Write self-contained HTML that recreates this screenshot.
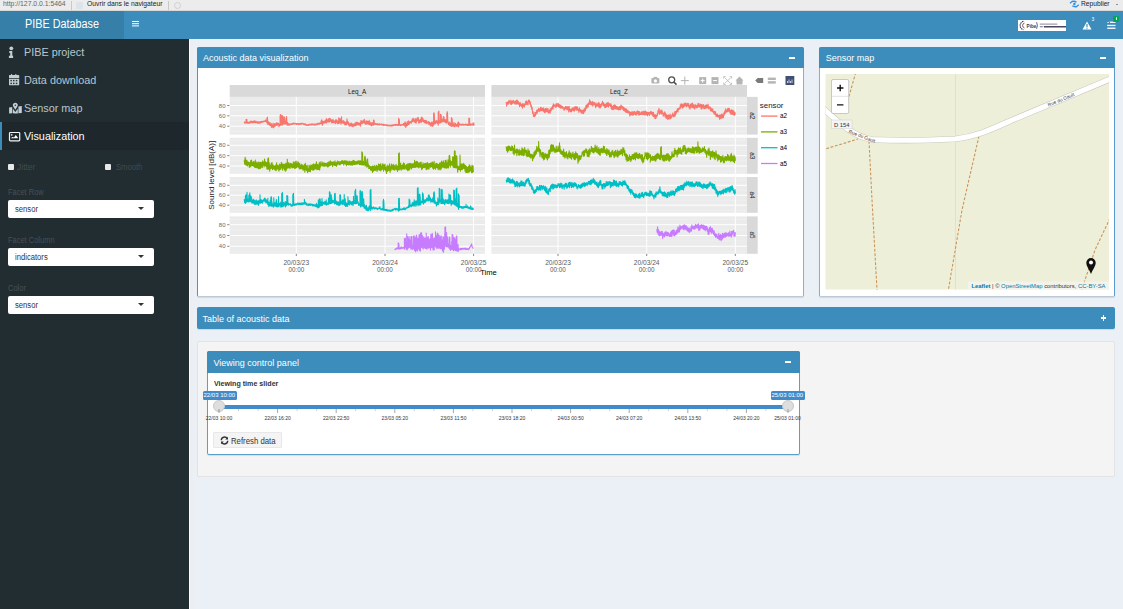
<!DOCTYPE html>
<html><head><meta charset="utf-8">
<style>
*{margin:0;padding:0;box-sizing:border-box}
html,body{width:1123px;height:609px;overflow:hidden}
body{background:#ebeff6;font-family:"Liberation Sans",sans-serif;position:relative}
.a{position:absolute}
.t{position:absolute;white-space:nowrap;line-height:1}
#bbar{left:0;top:0;width:1123px;height:11px;background:#ececec;border-bottom:1px solid #d8d8d8}
#logo{left:0;top:11px;width:124px;height:28px;background:#367fa9;z-index:2}
#nav{left:124px;top:11px;width:999px;height:28px;background:#3c8dbc;z-index:2}
#side{left:0;top:38px;width:189px;height:571px;background:#222d32}
.mi{position:absolute;left:0;width:189px;height:28px}
.mi .lab{position:absolute;left:24px;top:9px;font-size:11px;color:#b8c7ce;white-space:nowrap;line-height:1;transform:scaleX(0.985);transform-origin:0 0}
.mi.act{background:#1e282c;border-left:2px solid #3c8dbc}
.mi.act .lab{color:#fff;left:22px}
.sel{position:absolute;left:8px;width:146px;height:18px;background:#fff;border-radius:2px}
.sel .v{position:absolute;left:7px;top:5px;font-size:8.5px;color:#333;line-height:1;transform:scaleX(0.9);transform-origin:0 0}
.sel .c{position:absolute;left:130px;top:7px;width:0;height:0;border-left:3.5px solid transparent;border-right:3.5px solid transparent;border-top:3.5px solid #333}
.slab{position:absolute;left:8px;font-size:8.6px;color:#465055;line-height:1;white-space:nowrap;transform:scaleX(0.87);transform-origin:0 0}
.box{position:absolute;background:#fff;border:1px solid #8fb8d3;border-radius:2px;box-shadow:0 1px 1px rgba(0,0,0,0.1)}
.bh{position:absolute;left:-1px;top:-1px;right:-1px;background:#3c8dbc;border-radius:2px 2px 0 0}
.bt{position:absolute;font-size:9px;color:#fff;line-height:1;white-space:nowrap}
.minus{position:absolute;width:6px;height:1.6px;background:#fff}
</style></head>
<body>
<!-- browser bar -->
<div class="a" id="bbar"></div>
<div class="t" style="left:3px;top:-0.1px;font-size:7.5px;color:#666;transform:scaleX(0.91);transform-origin:0 0">http://127.0.0.1:5464</div>
<div class="a" style="left:71px;top:1px;width:1px;height:9px;background:#c8c8c8"></div>
<div class="a" style="left:76px;top:2px;width:7px;height:7px;background:#dde3ea;border-radius:1px"></div>
<div class="t" style="left:86.5px;top:-0.1px;font-size:7.5px;color:#222;transform:scaleX(0.90);transform-origin:0 0">Ouvrir dans le navigateur</div>
<div class="a" style="left:168px;top:1px;width:1px;height:9px;background:#c8c8c8"></div>
<div class="a" style="left:173.5px;top:1.5px;width:7.5px;height:7.5px;border:1px solid #d0d0d0;border-radius:50%"></div>
<svg class="a" style="left:1069px;top:0" width="11" height="9" viewBox="0 0 11 9"><path d="M1 3.2 L3 1.5 Q5.5 0.8 7.5 2.2" stroke="#2e90e8" stroke-width="1.3" fill="none"/><path d="M9.8 4.8 L7.8 6.5 Q5.3 7.2 3.3 5.8" stroke="#2e90e8" stroke-width="1.3" fill="none"/><circle cx="5.4" cy="4" r="1.2" fill="#2e90e8"/></svg>
<div class="t" style="left:1080.8px;top:-0.1px;font-size:7.5px;color:#222;transform:scaleX(0.89);transform-origin:0 0">Republier</div>
<div class="a" style="left:1115.7px;top:4px;width:0;height:0;border-left:1.5px solid transparent;border-right:1.5px solid transparent;border-top:1.6px solid #333"></div>

<!-- header -->
<div class="a" id="logo"></div>
<div class="t" style="z-index:3;left:24.7px;top:17.6px;font-size:12.5px;color:#fff;transform:scaleX(0.865);transform-origin:0 0">PIBE Database</div>
<div class="a" id="nav"></div>
<div class="a" style="z-index:3;left:131.7px;top:21px;width:7.5px;height:1.4px;background:#fff;box-shadow:0 2.2px 0 #fff,0 4.4px 0 #fff"></div>
<div class="a" style="z-index:3;left:1018px;top:19.8px;width:48px;height:11px;background:#fff"></div>
<svg class="a" style="z-index:3;left:1018px;top:19.8px" width="48" height="11" viewBox="0 0 48 11">
<path d="M5.5 1.3 A4.3 4.3 0 0 0 5.5 9.7" stroke="#3d3a55" stroke-width="1.1" fill="none" stroke-dasharray="1.6 0.6"/>
<path d="M6.5 3 A2.6 2.6 0 0 0 6.5 8" stroke="#3d3a55" stroke-width="0.8" fill="none"/>
<text x="8.6" y="7.6" font-size="4.6" font-weight="bold" fill="#3d3a55" font-family="Liberation Sans">Pibe</text>
<path d="M18.6 2.2 Q20.2 5.5 18.6 8.8" stroke="#3d3a55" stroke-width="0.8" fill="none"/>
<rect x="21.8" y="3.6" width="17.5" height="1" fill="#8a879a"/>
<rect x="21.8" y="6.1" width="3" height="1.2" fill="#8a879a"/><rect x="25.8" y="6" width="25" height="1.5" fill="#4a4660"/>
</svg>
<svg class="a" style="z-index:3;left:1082px;top:21px" width="10" height="9" viewBox="0 0 10 9"><path d="M5 0.5 L9.5 8.5 L0.5 8.5 Z" fill="#fff"/><rect x="4.4" y="3" width="1.2" height="3" fill="#3c8dbc"/><rect x="4.4" y="6.6" width="1.2" height="1.1" fill="#3c8dbc"/></svg>
<div class="t" style="z-index:3;left:1091.6px;top:17px;font-size:5px;color:#fff">3</div>
<svg class="a" style="z-index:3;left:1106px;top:20px" width="11" height="10" viewBox="0 0 11 10"><path d="M1.2 2.2 L2 3 L3.2 1.6" stroke="#fff" stroke-width="0.7" fill="none"/><rect x="4" y="1.6" width="5.5" height="1.3" fill="#fff"/><rect x="1.2" y="4.8" width="8.3" height="1.3" fill="#fff"/><rect x="1.2" y="7.6" width="8.3" height="1.3" fill="#fff"/></svg>
<div class="a" style="z-index:3;left:1113px;top:16px;width:6.3px;height:5.8px;background:#00a65a;border-radius:1px"></div>
<div class="a" style="z-index:4;left:1115.6px;top:17.2px;width:1.2px;height:3.2px;background:#dff5e8;border-radius:0.6px"></div>
<!-- sidebar -->
<div class="a" id="side"></div>
<div class="a" style="left:189px;top:38px;width:1px;height:571px;background:#f7f9fc"></div><div class="a" style="left:190px;top:38px;width:2.5px;height:571px;background:#eceef1"></div>
<div class="mi" style="top:38px"><div class="lab">PIBE project</div></div>
<div class="mi" style="top:66px"><div class="lab">Data download</div></div>
<div class="mi" style="top:94px"><div class="lab">Sensor map</div></div>
<div class="mi act" style="top:122px"><div class="lab">Visualization</div></div>
<!-- sidebar icons -->
<svg class="a" style="left:6px;top:44px" width="18" height="16" viewBox="0 0 18 16"><circle cx="5.3" cy="4.3" r="1.9" fill="#c2ced4"/><path d="M3.3 7.1 H6.3 V11.8 H7.1 V13.9 H2.9 V11.8 H4.2 V8.9 H3.3 Z" fill="#c2ced4"/></svg>
<svg class="a" style="left:6px;top:72px" width="18" height="16" viewBox="0 0 18 16"><path d="M3 3.4 Q3 3 3.4 3 H5 V2.3 Q5.6 1.6 6.2 2.3 V3 H9.2 V2.3 Q9.8 1.6 10.4 2.3 V3 H12.7 Q13.2 3 13.2 3.4 V5.9 H3 Z" fill="#c2ced4"/><path d="M3 6.7 H13.2 V12.8 Q13.2 13.2 12.8 13.2 H3.4 Q3 13.2 3 12.8 Z" fill="#c2ced4"/><g fill="#2a343a"><rect x="4.4" y="7.9" width="1.5" height="1.4"/><rect x="7" y="7.9" width="1.5" height="1.4"/><rect x="9.8" y="7.9" width="1.5" height="1.4"/><rect x="4.4" y="10.7" width="1.5" height="1.4"/><rect x="7" y="10.7" width="1.5" height="1.4"/><rect x="9.8" y="10.7" width="1.5" height="1.4"/></g></svg>
<svg class="a" style="left:6px;top:100px" width="18" height="16" viewBox="0 0 18 16"><path d="M3.1 7.5 L6.2 7 V13.2 L3.1 13.5 Z" fill="#c2ced4"/><path d="M6.8 8.6 L9.3 12 L11.8 8.6 V13.4 L9.3 13.6 L6.8 13.2 Z" fill="#c2ced4"/><path d="M12.4 6.5 L15.8 6.1 V13 L12.4 13.3 Z" fill="#c2ced4"/><path d="M9.3 9.8 L7.2 6.6 A2.5 2.5 0 1 1 11.4 6.6 Z" fill="#c2ced4"/><circle cx="9.3" cy="5.3" r="0.8" fill="#2a343a"/></svg>
<svg class="a" style="left:6px;top:128px" width="18" height="16" viewBox="0 0 18 16"><rect x="3.5" y="4.5" width="10.2" height="8.4" rx="0.8" fill="none" stroke="#f2f2f2" stroke-width="1.2"/><circle cx="5.7" cy="6.8" r="0.9" fill="#e8e8e8"/><path d="M5 10 L6.5 9 L8 9.6 L9.7 7.1 L11.8 9.4 V10.2 H5 Z" fill="#fff"/></svg>
<!-- checkboxes -->
<div class="a" style="left:8px;top:164px;width:6px;height:6px;background:#e8e8e8;border-radius:1px"></div>
<div class="t" style="left:17px;top:163px;font-size:8.5px;color:#414b50">Jitter</div>
<div class="a" style="left:105px;top:164px;width:6px;height:6px;background:#e8e8e8;border-radius:1px"></div>
<div class="t" style="left:116px;top:163px;font-size:8.5px;color:#414b50;transform:scaleX(0.9);transform-origin:0 0">Smooth</div>

<div class="slab" style="top:187.8px">Facet Row</div>
<div class="sel" style="top:200px"><div class="v">sensor</div><div class="c"></div></div>
<div class="slab" style="top:236.2px">Facet Column</div>
<div class="sel" style="top:248px"><div class="v">indicators</div><div class="c"></div></div>
<div class="slab" style="top:284px">Color</div>
<div class="sel" style="top:295.5px"><div class="v">sensor</div><div class="c"></div></div>

<!-- Box 1: Acoustic data visualization -->
<div class="box" style="left:197px;top:47px;width:607px;height:249.5px;border-color:#a9c3d3 #8db3c2 #bccad5 #4d95c6"><div class="bh" style="height:21px"></div></div>
<div class="t bt" style="left:203px;top:53.8px">Acoustic data visualization</div>
<div class="minus" style="left:789px;top:57px"></div>

<!-- Box 2: Sensor map -->
<div class="box" style="left:819px;top:47px;width:296px;height:249.5px;border-color:#a9c3d3 #5b9bcb #bccad5 #86b2c0"><div class="bh" style="height:21px"></div></div>
<div class="t bt" style="left:825.8px;top:53.8px">Sensor map</div>
<div class="minus" style="left:1100px;top:57px"></div>

<!-- Box 3: Table (collapsed) -->
<div class="a" style="left:197px;top:307px;width:918px;height:22px;background:#3c8dbc;border-radius:2px;box-shadow:0 1px 1px rgba(0,0,0,0.1)"></div>
<div class="t bt" style="left:202.5px;top:314.8px">Table of acoustic data</div>
<div class="a" style="left:1100.8px;top:317.2px;width:5.6px;height:1.4px;background:#fff"></div>
<div class="a" style="left:1102.9px;top:315.1px;width:1.4px;height:5.8px;background:#fff"></div>

<!-- well -->
<div class="a" style="left:197px;top:341px;width:918px;height:136px;background:#f4f4f4;border:1px solid #e3e3e3;border-radius:2px"></div>

<!-- Viewing control panel -->
<div class="box" style="left:207px;top:351px;width:593px;height:104px;border-color:#5d9fcc"><div class="bh" style="height:21.5px"></div></div>
<div class="t bt" style="left:213.5px;top:358.6px">Viewing control panel</div>
<div class="minus" style="left:785px;top:361px"></div>
<div class="t" style="left:213.8px;top:379.5px;font-size:8px;font-weight:bold;color:#333;transform:scaleX(0.89);transform-origin:0 0">Viewing time slider</div>

<!-- slider -->
<div class="a" style="left:219px;top:404.8px;width:569px;height:4px;background:#428bca"></div>
<div class="a" id="ticks"></div>
<div class="a" style="left:213px;top:400.3px;width:12px;height:12px;border-radius:50%;background:#dedede;border:1px solid #c8c8c8"></div>
<div class="a" style="left:781.5px;top:400px;width:12px;height:12px;border-radius:50%;background:#dedede;border:1px solid #c8c8c8"></div>
<div class="a" style="left:202.7px;top:391px;width:34px;height:8.8px;background:#428bca;border-radius:1.5px"></div>
<div class="t" style="left:203.5px;top:392px;font-size:6px;color:#fff">22/03 10:00</div>
<div class="a" style="left:770.7px;top:391px;width:34px;height:8.6px;background:#428bca;border-radius:1.5px"></div>
<div class="t" style="left:771.5px;top:392.2px;font-size:6px;color:#fff">25/03 01:00</div>

<!-- refresh button -->
<div class="a" style="left:213.3px;top:431.6px;width:69px;height:16.7px;background:#f4f4f4;border:1px solid #e8e8e8;border-radius:1px"></div>
<svg class="a" style="left:219.8px;top:436.3px" width="9" height="9" viewBox="0 0 9 9"><path d="M1.3 4.3 A3.2 3.2 0 0 1 7.2 2.6" stroke="#333" stroke-width="1.4" fill="none"/><path d="M8 0.8 V3.6 H5.2 Z" fill="#333"/><path d="M7.7 4.7 A3.2 3.2 0 0 1 1.8 6.4" stroke="#333" stroke-width="1.4" fill="none"/><path d="M1 8.2 V5.4 H3.8 Z" fill="#333"/></svg>
<div class="t" style="left:230.7px;top:436.5px;font-size:8.8px;color:#333;transform:scaleX(0.885);transform-origin:0 0">Refresh data</div>

<svg class="a" style="left:0;top:0" width="1123" height="609" viewBox="0 0 1123 609" font-family="Liberation Sans">
<rect x="229.7" y="85.0" width="255.3" height="11.9" fill="#d9d9d9"/>
<rect x="491.4" y="85.0" width="255.6" height="11.9" fill="#d9d9d9"/>
<text x="357" y="93.6" font-size="6.3" fill="#1a1a1a" text-anchor="middle">Leq_A</text>
<text x="619" y="93.6" font-size="6.3" fill="#1a1a1a" text-anchor="middle">Leq_Z</text>
<rect x="229.7" y="96.9" width="255.3" height="37.7" fill="#ebebeb"/>
<line x1="229.7" x2="485.0" y1="131.4" y2="131.4" stroke="#f2f2f2" stroke-width="0.5"/>
<line x1="229.7" x2="485.0" y1="121.0" y2="121.0" stroke="#f2f2f2" stroke-width="0.5"/>
<line x1="229.7" x2="485.0" y1="110.7" y2="110.7" stroke="#f2f2f2" stroke-width="0.5"/>
<line x1="229.7" x2="485.0" y1="100.3" y2="100.3" stroke="#f2f2f2" stroke-width="0.5"/>
<line x1="229.7" x2="485.0" y1="126.2" y2="126.2" stroke="#fff" stroke-width="1"/>
<line x1="229.7" x2="485.0" y1="115.8" y2="115.8" stroke="#fff" stroke-width="1"/>
<line x1="229.7" x2="485.0" y1="105.5" y2="105.5" stroke="#fff" stroke-width="1"/>
<line x1="296.3" x2="296.3" y1="96.9" y2="134.6" stroke="#fff" stroke-width="1"/>
<line x1="385.0" x2="385.0" y1="96.9" y2="134.6" stroke="#fff" stroke-width="1"/>
<line x1="473.6" x2="473.6" y1="96.9" y2="134.6" stroke="#fff" stroke-width="1"/>
<rect x="491.4" y="96.9" width="255.6" height="37.7" fill="#ebebeb"/>
<line x1="491.4" x2="747.0" y1="131.4" y2="131.4" stroke="#f2f2f2" stroke-width="0.5"/>
<line x1="491.4" x2="747.0" y1="121.0" y2="121.0" stroke="#f2f2f2" stroke-width="0.5"/>
<line x1="491.4" x2="747.0" y1="110.7" y2="110.7" stroke="#f2f2f2" stroke-width="0.5"/>
<line x1="491.4" x2="747.0" y1="100.3" y2="100.3" stroke="#f2f2f2" stroke-width="0.5"/>
<line x1="491.4" x2="747.0" y1="126.2" y2="126.2" stroke="#fff" stroke-width="1"/>
<line x1="491.4" x2="747.0" y1="115.8" y2="115.8" stroke="#fff" stroke-width="1"/>
<line x1="491.4" x2="747.0" y1="105.5" y2="105.5" stroke="#fff" stroke-width="1"/>
<line x1="558.0" x2="558.0" y1="96.9" y2="134.6" stroke="#fff" stroke-width="1"/>
<line x1="646.7" x2="646.7" y1="96.9" y2="134.6" stroke="#fff" stroke-width="1"/>
<line x1="735.3" x2="735.3" y1="96.9" y2="134.6" stroke="#fff" stroke-width="1"/>
<rect x="747" y="96.9" width="10.7" height="37.7" fill="#d9d9d9"/>
<text x="0" y="0" font-size="63" fill="#1a1a1a" text-anchor="middle" transform="translate(750.2 115.8) rotate(90) scale(0.1)">a2</text>
<line x1="227.2" x2="229.4" y1="126.2" y2="126.2" stroke="#333" stroke-width="0.6"/>
<text x="225.5" y="128.3" font-size="6" fill="#6b6b6b" text-anchor="end">40</text>
<line x1="227.2" x2="229.4" y1="115.8" y2="115.8" stroke="#333" stroke-width="0.6"/>
<text x="225.5" y="117.9" font-size="6" fill="#6b6b6b" text-anchor="end">60</text>
<line x1="227.2" x2="229.4" y1="105.5" y2="105.5" stroke="#333" stroke-width="0.6"/>
<text x="225.5" y="107.6" font-size="6" fill="#6b6b6b" text-anchor="end">80</text>
<rect x="229.7" y="137.8" width="255.3" height="36.0" fill="#ebebeb"/>
<line x1="229.7" x2="485.0" y1="171.2" y2="171.2" stroke="#f2f2f2" stroke-width="0.5"/>
<line x1="229.7" x2="485.0" y1="160.8" y2="160.8" stroke="#f2f2f2" stroke-width="0.5"/>
<line x1="229.7" x2="485.0" y1="150.5" y2="150.5" stroke="#f2f2f2" stroke-width="0.5"/>
<line x1="229.7" x2="485.0" y1="140.1" y2="140.1" stroke="#f2f2f2" stroke-width="0.5"/>
<line x1="229.7" x2="485.0" y1="166.0" y2="166.0" stroke="#fff" stroke-width="1"/>
<line x1="229.7" x2="485.0" y1="155.7" y2="155.7" stroke="#fff" stroke-width="1"/>
<line x1="229.7" x2="485.0" y1="145.3" y2="145.3" stroke="#fff" stroke-width="1"/>
<line x1="296.3" x2="296.3" y1="137.8" y2="173.8" stroke="#fff" stroke-width="1"/>
<line x1="385.0" x2="385.0" y1="137.8" y2="173.8" stroke="#fff" stroke-width="1"/>
<line x1="473.6" x2="473.6" y1="137.8" y2="173.8" stroke="#fff" stroke-width="1"/>
<rect x="491.4" y="137.8" width="255.6" height="36.0" fill="#ebebeb"/>
<line x1="491.4" x2="747.0" y1="171.2" y2="171.2" stroke="#f2f2f2" stroke-width="0.5"/>
<line x1="491.4" x2="747.0" y1="160.8" y2="160.8" stroke="#f2f2f2" stroke-width="0.5"/>
<line x1="491.4" x2="747.0" y1="150.5" y2="150.5" stroke="#f2f2f2" stroke-width="0.5"/>
<line x1="491.4" x2="747.0" y1="140.1" y2="140.1" stroke="#f2f2f2" stroke-width="0.5"/>
<line x1="491.4" x2="747.0" y1="166.0" y2="166.0" stroke="#fff" stroke-width="1"/>
<line x1="491.4" x2="747.0" y1="155.7" y2="155.7" stroke="#fff" stroke-width="1"/>
<line x1="491.4" x2="747.0" y1="145.3" y2="145.3" stroke="#fff" stroke-width="1"/>
<line x1="558.0" x2="558.0" y1="137.8" y2="173.8" stroke="#fff" stroke-width="1"/>
<line x1="646.7" x2="646.7" y1="137.8" y2="173.8" stroke="#fff" stroke-width="1"/>
<line x1="735.3" x2="735.3" y1="137.8" y2="173.8" stroke="#fff" stroke-width="1"/>
<rect x="747" y="137.8" width="10.7" height="36.0" fill="#d9d9d9"/>
<text x="0" y="0" font-size="63" fill="#1a1a1a" text-anchor="middle" transform="translate(750.2 155.8) rotate(90) scale(0.1)">a3</text>
<line x1="227.2" x2="229.4" y1="166.0" y2="166.0" stroke="#333" stroke-width="0.6"/>
<text x="225.5" y="168.1" font-size="6" fill="#6b6b6b" text-anchor="end">40</text>
<line x1="227.2" x2="229.4" y1="155.7" y2="155.7" stroke="#333" stroke-width="0.6"/>
<text x="225.5" y="157.8" font-size="6" fill="#6b6b6b" text-anchor="end">60</text>
<line x1="227.2" x2="229.4" y1="145.3" y2="145.3" stroke="#333" stroke-width="0.6"/>
<text x="225.5" y="147.4" font-size="6" fill="#6b6b6b" text-anchor="end">80</text>
<rect x="229.7" y="177.0" width="255.3" height="35.8" fill="#ebebeb"/>
<line x1="229.7" x2="485.0" y1="210.2" y2="210.2" stroke="#f2f2f2" stroke-width="0.5"/>
<line x1="229.7" x2="485.0" y1="200.2" y2="200.2" stroke="#f2f2f2" stroke-width="0.5"/>
<line x1="229.7" x2="485.0" y1="190.3" y2="190.3" stroke="#f2f2f2" stroke-width="0.5"/>
<line x1="229.7" x2="485.0" y1="180.3" y2="180.3" stroke="#f2f2f2" stroke-width="0.5"/>
<line x1="229.7" x2="485.0" y1="205.2" y2="205.2" stroke="#fff" stroke-width="1"/>
<line x1="229.7" x2="485.0" y1="195.2" y2="195.2" stroke="#fff" stroke-width="1"/>
<line x1="229.7" x2="485.0" y1="185.3" y2="185.3" stroke="#fff" stroke-width="1"/>
<line x1="296.3" x2="296.3" y1="177.0" y2="212.8" stroke="#fff" stroke-width="1"/>
<line x1="385.0" x2="385.0" y1="177.0" y2="212.8" stroke="#fff" stroke-width="1"/>
<line x1="473.6" x2="473.6" y1="177.0" y2="212.8" stroke="#fff" stroke-width="1"/>
<rect x="491.4" y="177.0" width="255.6" height="35.8" fill="#ebebeb"/>
<line x1="491.4" x2="747.0" y1="210.2" y2="210.2" stroke="#f2f2f2" stroke-width="0.5"/>
<line x1="491.4" x2="747.0" y1="200.2" y2="200.2" stroke="#f2f2f2" stroke-width="0.5"/>
<line x1="491.4" x2="747.0" y1="190.3" y2="190.3" stroke="#f2f2f2" stroke-width="0.5"/>
<line x1="491.4" x2="747.0" y1="180.3" y2="180.3" stroke="#f2f2f2" stroke-width="0.5"/>
<line x1="491.4" x2="747.0" y1="205.2" y2="205.2" stroke="#fff" stroke-width="1"/>
<line x1="491.4" x2="747.0" y1="195.2" y2="195.2" stroke="#fff" stroke-width="1"/>
<line x1="491.4" x2="747.0" y1="185.3" y2="185.3" stroke="#fff" stroke-width="1"/>
<line x1="558.0" x2="558.0" y1="177.0" y2="212.8" stroke="#fff" stroke-width="1"/>
<line x1="646.7" x2="646.7" y1="177.0" y2="212.8" stroke="#fff" stroke-width="1"/>
<line x1="735.3" x2="735.3" y1="177.0" y2="212.8" stroke="#fff" stroke-width="1"/>
<rect x="747" y="177.0" width="10.7" height="35.8" fill="#d9d9d9"/>
<text x="0" y="0" font-size="63" fill="#1a1a1a" text-anchor="middle" transform="translate(750.2 194.9) rotate(90) scale(0.1)">a4</text>
<line x1="227.2" x2="229.4" y1="205.2" y2="205.2" stroke="#333" stroke-width="0.6"/>
<text x="225.5" y="207.3" font-size="6" fill="#6b6b6b" text-anchor="end">40</text>
<line x1="227.2" x2="229.4" y1="195.2" y2="195.2" stroke="#333" stroke-width="0.6"/>
<text x="225.5" y="197.3" font-size="6" fill="#6b6b6b" text-anchor="end">60</text>
<line x1="227.2" x2="229.4" y1="185.3" y2="185.3" stroke="#333" stroke-width="0.6"/>
<text x="225.5" y="187.4" font-size="6" fill="#6b6b6b" text-anchor="end">80</text>
<rect x="229.7" y="216.4" width="255.3" height="37.4" fill="#ebebeb"/>
<line x1="229.7" x2="485.0" y1="251.7" y2="251.7" stroke="#f2f2f2" stroke-width="0.5"/>
<line x1="229.7" x2="485.0" y1="240.9" y2="240.9" stroke="#f2f2f2" stroke-width="0.5"/>
<line x1="229.7" x2="485.0" y1="230.1" y2="230.1" stroke="#f2f2f2" stroke-width="0.5"/>
<line x1="229.7" x2="485.0" y1="219.3" y2="219.3" stroke="#f2f2f2" stroke-width="0.5"/>
<line x1="229.7" x2="485.0" y1="246.3" y2="246.3" stroke="#fff" stroke-width="1"/>
<line x1="229.7" x2="485.0" y1="235.5" y2="235.5" stroke="#fff" stroke-width="1"/>
<line x1="229.7" x2="485.0" y1="224.7" y2="224.7" stroke="#fff" stroke-width="1"/>
<line x1="296.3" x2="296.3" y1="216.4" y2="253.8" stroke="#fff" stroke-width="1"/>
<line x1="385.0" x2="385.0" y1="216.4" y2="253.8" stroke="#fff" stroke-width="1"/>
<line x1="473.6" x2="473.6" y1="216.4" y2="253.8" stroke="#fff" stroke-width="1"/>
<rect x="491.4" y="216.4" width="255.6" height="37.4" fill="#ebebeb"/>
<line x1="491.4" x2="747.0" y1="251.7" y2="251.7" stroke="#f2f2f2" stroke-width="0.5"/>
<line x1="491.4" x2="747.0" y1="240.9" y2="240.9" stroke="#f2f2f2" stroke-width="0.5"/>
<line x1="491.4" x2="747.0" y1="230.1" y2="230.1" stroke="#f2f2f2" stroke-width="0.5"/>
<line x1="491.4" x2="747.0" y1="219.3" y2="219.3" stroke="#f2f2f2" stroke-width="0.5"/>
<line x1="491.4" x2="747.0" y1="246.3" y2="246.3" stroke="#fff" stroke-width="1"/>
<line x1="491.4" x2="747.0" y1="235.5" y2="235.5" stroke="#fff" stroke-width="1"/>
<line x1="491.4" x2="747.0" y1="224.7" y2="224.7" stroke="#fff" stroke-width="1"/>
<line x1="558.0" x2="558.0" y1="216.4" y2="253.8" stroke="#fff" stroke-width="1"/>
<line x1="646.7" x2="646.7" y1="216.4" y2="253.8" stroke="#fff" stroke-width="1"/>
<line x1="735.3" x2="735.3" y1="216.4" y2="253.8" stroke="#fff" stroke-width="1"/>
<rect x="747" y="216.4" width="10.7" height="37.4" fill="#d9d9d9"/>
<text x="0" y="0" font-size="63" fill="#1a1a1a" text-anchor="middle" transform="translate(750.2 235.1) rotate(90) scale(0.1)">a5</text>
<line x1="227.2" x2="229.4" y1="246.3" y2="246.3" stroke="#333" stroke-width="0.6"/>
<text x="225.5" y="248.4" font-size="6" fill="#6b6b6b" text-anchor="end">40</text>
<line x1="227.2" x2="229.4" y1="235.5" y2="235.5" stroke="#333" stroke-width="0.6"/>
<text x="225.5" y="237.6" font-size="6" fill="#6b6b6b" text-anchor="end">60</text>
<line x1="227.2" x2="229.4" y1="224.7" y2="224.7" stroke="#333" stroke-width="0.6"/>
<text x="225.5" y="226.8" font-size="6" fill="#6b6b6b" text-anchor="end">80</text>
<line x1="296.3" x2="296.3" y1="253.8" y2="256" stroke="#333" stroke-width="0.6"/>
<text x="296.3" y="264.8" font-size="6.6" fill="#5a5a5a" text-anchor="middle">20/03/23</text>
<text x="296.3" y="271.9" font-size="6.3" fill="#5a5a5a" text-anchor="middle">00:00</text>
<line x1="385.0" x2="385.0" y1="253.8" y2="256" stroke="#333" stroke-width="0.6"/>
<text x="385.0" y="264.8" font-size="6.6" fill="#5a5a5a" text-anchor="middle">20/03/24</text>
<text x="385.0" y="271.9" font-size="6.3" fill="#5a5a5a" text-anchor="middle">00:00</text>
<line x1="473.6" x2="473.6" y1="253.8" y2="256" stroke="#333" stroke-width="0.6"/>
<text x="473.6" y="264.8" font-size="6.6" fill="#5a5a5a" text-anchor="middle">20/03/25</text>
<text x="473.6" y="271.9" font-size="6.3" fill="#5a5a5a" text-anchor="middle">00:00</text>
<line x1="558.0" x2="558.0" y1="253.8" y2="256" stroke="#333" stroke-width="0.6"/>
<text x="558.0" y="264.8" font-size="6.6" fill="#5a5a5a" text-anchor="middle">20/03/23</text>
<text x="558.0" y="271.9" font-size="6.3" fill="#5a5a5a" text-anchor="middle">00:00</text>
<line x1="646.7" x2="646.7" y1="253.8" y2="256" stroke="#333" stroke-width="0.6"/>
<text x="646.7" y="264.8" font-size="6.6" fill="#5a5a5a" text-anchor="middle">20/03/24</text>
<text x="646.7" y="271.9" font-size="6.3" fill="#5a5a5a" text-anchor="middle">00:00</text>
<line x1="735.3" x2="735.3" y1="253.8" y2="256" stroke="#333" stroke-width="0.6"/>
<text x="735.3" y="264.8" font-size="6.6" fill="#5a5a5a" text-anchor="middle">20/03/25</text>
<text x="735.3" y="271.9" font-size="6.3" fill="#5a5a5a" text-anchor="middle">00:00</text>
<text x="488.5" y="275" font-size="7.6" fill="#000" text-anchor="middle">Time</text>
<text x="0" y="0" font-size="8" fill="#222" text-anchor="middle" transform="translate(213.8 175.3) rotate(-90)">Sound level [dB(A)]</text>
<polyline points="244.2,121.5 244.7,123.1 245.1,122.3 245.6,123.1 246.1,121.8 246.1,122.3 246.1,119.3 246.4,122.3 246.4,119.9 246.8,122.3 246.8,119.2 247.1,122.3 246.5,123.0 247.0,122.4 247.4,123.3 247.9,122.1 248.4,123.2 248.8,122.2 249.3,123.2 249.8,121.8 250.2,123.0 250.7,121.0 251.2,122.4 251.6,121.3 252.1,123.0 252.5,121.4 253.0,122.4 253.5,121.0 253.9,122.6 254.4,120.9 254.9,122.8 255.3,121.0 255.8,122.8 256.2,121.4 256.7,122.8 257.2,121.7 257.6,123.3 258.1,121.8 258.6,123.2 259.0,121.9 259.5,123.1 260.0,121.8 260.4,123.2 260.9,121.5 261.3,122.4 261.8,121.3 262.3,122.3 262.7,121.4 263.2,122.0 263.7,121.0 264.1,121.8 264.6,120.9 265.0,121.4 265.5,119.9 266.0,121.7 266.4,120.4 266.9,122.9 266.9,118.1 267.1,122.9 267.4,120.6 267.4,117.1 267.6,120.6 267.8,124.4 268.3,121.5 268.8,124.5 269.2,122.4 269.7,125.5 270.1,122.7 270.6,125.6 271.1,124.1 271.5,127.5 272.0,123.4 272.5,127.1 272.9,125.0 273.4,128.0 273.8,123.4 274.3,126.8 274.8,123.9 275.2,126.1 275.7,123.5 276.2,125.3 276.6,122.7 277.1,125.7 277.5,123.0 278.0,124.8 278.5,123.3 278.9,126.8 279.4,124.4 279.9,125.5 280.3,122.8 280.1,124.3 280.1,115.7 280.4,124.3 280.4,114.6 280.8,124.3 280.8,114.8 281.1,124.3 280.8,125.3 281.3,121.6 281.7,125.0 281.7,121.7 281.9,125.0 282.2,121.9 281.9,124.1 281.9,115.6 282.3,124.1 282.3,116.0 282.6,124.1 282.6,115.7 282.9,124.1 282.6,124.9 283.1,122.2 283.6,123.8 283.6,123.9 283.6,117.3 283.9,123.9 283.9,116.8 284.3,123.9 284.3,116.9 284.6,123.9 284.0,121.9 284.5,123.6 285.0,121.0 285.4,124.2 285.9,122.4 285.9,123.9 285.9,118.0 286.2,123.9 286.2,117.9 286.6,123.9 286.6,116.6 286.9,123.9 286.3,123.5 286.8,122.5 287.3,125.3 287.7,122.5 288.2,124.9 288.7,123.8 289.1,125.2 289.6,124.0 290.1,124.8 290.5,123.9 291.0,124.4 291.4,123.7 291.9,124.3 292.4,123.6 292.8,124.2 293.3,122.9 293.8,124.0 294.2,123.2 294.7,123.9 295.1,123.2 295.6,124.1 296.1,123.6 296.5,124.5 297.0,123.5 297.5,124.2 297.9,123.6 298.4,124.6 298.8,123.5 299.3,124.2 299.8,123.6 300.2,124.4 300.7,123.4 301.2,124.2 301.6,123.3 302.1,123.9 302.6,123.2 303.0,124.0 303.5,123.6 303.9,124.7 304.4,123.8 304.9,124.7 305.3,123.7 305.8,125.2 306.3,124.6 306.7,125.4 307.2,124.8 307.6,125.3 308.1,124.7 308.6,125.4 309.0,124.3 309.5,125.0 310.0,124.1 310.4,124.9 310.9,124.3 311.4,124.9 311.8,123.8 312.3,124.9 312.7,124.0 313.2,124.4 313.7,124.0 314.1,125.2 314.6,124.1 315.1,125.1 315.5,124.1 316.0,124.8 316.4,123.9 316.9,124.7 317.4,123.3 317.8,124.3 318.3,123.2 318.8,124.3 318.8,123.5 319.0,124.3 319.2,123.1 319.7,124.1 320.2,123.1 320.6,123.6 321.1,121.9 321.1,123.1 321.1,121.1 321.4,123.1 321.4,120.1 321.8,123.1 321.8,119.8 322.1,123.1 321.5,123.9 322.0,122.1 322.5,125.3 322.9,121.3 323.4,123.3 323.9,121.4 324.3,123.1 324.8,120.8 325.2,122.6 325.7,119.8 326.2,123.2 326.6,118.6 327.1,122.1 327.6,119.9 328.0,121.8 328.5,119.3 328.9,122.2 328.7,120.5 328.7,118.6 329.1,120.5 329.1,118.5 329.4,120.5 329.4,118.2 329.7,120.5 329.4,120.5 329.9,121.7 330.3,118.6 330.8,121.2 331.3,119.7 331.7,122.9 332.2,119.9 332.7,122.8 333.1,119.6 333.6,122.6 334.0,121.1 334.5,122.4 335.0,120.7 335.4,123.6 335.9,119.6 336.4,122.3 336.8,120.0 337.3,123.6 337.7,121.0 338.2,123.5 338.7,122.0 338.7,117.9 338.9,122.0 339.1,123.5 339.6,120.4 339.6,121.2 339.6,118.5 339.9,121.2 339.9,118.6 340.3,121.2 340.3,118.8 340.6,121.2 340.1,122.6 340.5,120.4 341.0,124.2 341.5,121.0 341.5,116.8 341.7,121.0 341.9,122.9 342.4,121.0 342.8,123.2 343.3,120.6 343.8,123.5 344.2,121.4 344.7,124.6 345.2,122.2 345.6,124.9 346.1,121.7 346.5,124.6 347.0,122.0 347.0,118.9 347.2,122.0 347.5,123.5 347.9,121.2 348.4,125.0 348.9,122.7 349.3,126.3 349.8,124.0 350.3,125.7 350.7,123.4 351.2,126.3 351.6,123.1 352.1,126.1 352.6,124.1 353.0,126.8 353.5,124.1 354.0,126.1 354.4,123.9 354.9,125.5 355.3,122.7 355.8,126.0 356.3,122.0 356.7,125.0 357.2,122.4 357.7,124.8 357.7,122.5 357.9,124.8 358.1,122.5 358.6,124.9 359.0,123.3 359.5,124.9 360.0,122.5 360.4,126.1 360.4,123.4 360.6,126.1 360.9,120.6 361.4,123.8 361.8,120.8 362.3,123.6 362.8,121.0 363.2,122.7 363.7,120.3 364.1,123.0 364.1,119.4 364.3,123.0 364.6,119.7 365.1,124.0 365.5,121.7 366.0,124.4 366.5,120.9 366.9,123.6 367.4,121.0 367.8,123.9 368.3,121.5 368.8,124.4 369.2,120.4 369.7,124.8 370.2,122.0 370.6,125.2 371.1,123.0 371.6,126.0 372.0,122.5 372.5,125.1 372.9,122.8 373.4,125.2 373.4,123.8 373.4,120.0 373.8,123.8 373.8,120.2 374.1,123.8 374.1,120.2 374.4,123.8 373.9,123.8 373.9,122.8 374.1,123.8 374.3,124.5 374.8,123.4 375.3,124.4 375.7,123.5 376.2,124.5 376.6,123.8 377.1,124.7 377.6,123.6 378.0,124.9 378.5,124.3 379.0,124.8 379.4,123.8 379.9,124.8 380.4,124.1 380.8,124.6 381.3,124.0 381.7,124.9 382.2,124.6 382.7,125.2 383.1,124.0 383.6,125.4 384.1,124.3 384.5,125.3 385.0,124.8 385.4,125.5 385.9,124.7 386.4,125.6 386.8,124.8 387.3,126.0 387.8,125.0 388.2,125.8 388.7,125.1 389.1,125.9 389.6,125.2 390.1,125.8 390.5,125.3 391.0,126.1 391.5,125.0 391.9,126.0 392.4,124.7 392.9,125.9 393.3,125.0 393.8,125.4 394.2,124.5 394.7,125.3 395.2,124.4 395.6,125.6 396.1,124.3 396.6,125.1 397.0,124.5 397.5,125.4 397.9,124.7 398.4,125.6 398.9,124.6 398.6,124.8 398.6,118.3 399.0,124.8 399.0,120.0 399.3,124.8 399.3,119.3 399.6,124.8 399.3,125.2 399.8,124.2 400.3,125.7 400.7,124.8 401.2,125.4 401.7,124.6 402.1,125.0 402.6,124.4 403.0,125.4 403.5,124.4 403.5,123.3 403.7,124.4 404.0,124.9 404.4,123.0 404.9,126.4 405.4,124.3 405.1,123.7 405.1,121.8 405.5,123.7 405.5,122.8 405.8,123.7 405.8,123.2 406.1,123.7 405.8,127.4 406.3,123.6 406.7,125.9 407.2,121.5 407.7,125.4 408.1,121.8 408.6,124.4 408.6,120.8 408.8,124.4 409.1,121.9 409.5,123.9 410.0,121.5 410.4,122.8 410.9,121.6 411.4,123.1 411.8,120.4 412.3,121.8 412.3,118.8 412.5,121.8 412.8,119.1 413.2,121.2 413.7,118.2 414.2,121.8 414.6,120.0 415.1,122.6 415.5,121.2 415.5,121.2 415.5,118.8 415.9,121.2 415.9,118.6 416.2,121.2 416.2,119.8 416.5,121.2 416.0,123.3 416.5,119.5 416.9,121.3 417.4,117.6 417.9,120.6 418.3,119.9 418.3,117.6 418.5,119.9 418.8,123.2 419.2,120.4 419.7,122.5 420.2,119.3 420.6,122.3 421.1,118.6 421.6,122.2 421.3,120.2 421.3,117.4 421.7,120.2 421.7,117.2 422.0,120.2 422.0,117.1 422.3,120.2 422.0,119.1 422.5,121.3 423.0,118.5 423.4,121.7 423.9,120.2 424.3,122.6 424.8,120.3 425.3,122.8 425.7,120.4 426.2,123.6 426.7,120.7 427.1,123.3 427.6,122.4 428.0,123.2 428.5,121.5 429.0,124.6 429.4,122.1 429.9,124.8 430.4,123.0 430.8,126.3 431.3,122.1 431.8,126.0 431.8,123.4 432.0,126.0 432.2,122.4 432.7,126.5 433.1,121.9 433.6,125.1 433.6,123.0 433.6,113.0 434.0,123.0 434.0,112.7 434.3,123.0 434.3,113.9 434.6,123.0 434.1,122.0 434.5,123.9 435.0,120.6 435.5,123.7 435.9,121.5 436.4,122.4 436.8,120.2 437.3,123.4 437.8,121.7 438.2,125.2 438.2,122.2 438.2,112.1 438.6,122.2 438.6,111.5 438.9,122.2 438.9,111.1 439.2,122.2 438.7,121.9 439.2,123.1 439.6,121.2 440.1,123.0 440.5,119.6 440.5,122.0 440.5,114.3 440.9,122.0 440.9,114.6 441.2,122.0 441.2,114.9 441.5,122.0 441.0,122.4 441.5,119.3 441.9,122.1 442.4,119.1 442.9,120.9 443.3,119.0 443.3,121.8 443.3,116.6 443.7,121.8 443.7,116.7 444.0,121.8 444.0,117.0 444.3,121.8 443.8,121.2 444.3,119.0 444.7,121.9 445.2,119.6 445.6,122.8 446.1,119.7 446.6,123.1 447.0,119.7 446.8,122.1 446.8,113.0 447.2,122.1 447.2,111.6 447.5,122.1 447.5,112.5 447.8,122.1 447.5,122.0 448.0,121.1 448.4,124.5 448.9,122.7 449.3,125.1 449.8,122.1 450.3,125.8 450.7,123.6 451.2,126.5 451.7,123.1 451.4,123.8 451.4,117.6 451.8,123.8 451.8,118.2 452.1,123.8 452.1,118.5 452.4,123.8 452.1,126.1 452.6,123.4 453.1,126.1 453.5,124.0 454.0,126.4 454.0,122.3 454.2,126.4 454.4,124.2 454.9,126.8 455.4,123.2 455.8,125.5 456.3,124.7 456.8,126.5 456.8,124.4 457.0,126.5 457.2,124.6 457.7,126.1 457.7,125.0 457.7,123.1 458.0,125.0 458.0,122.3 458.4,125.0 458.4,121.9 458.7,125.0 458.1,125.1 458.6,126.9 459.1,123.0 459.5,124.9 460.0,124.0 460.5,125.0 460.9,124.2 461.4,125.3 461.9,124.2 462.3,125.0 462.8,124.1 463.2,125.2 463.7,124.4 464.2,125.1 464.6,124.4 465.1,125.0 465.6,124.1 466.0,125.1 466.5,124.2 466.9,125.2 467.4,124.2 467.9,125.5 468.3,124.4 468.8,125.4 468.8,125.1 468.8,118.3 469.1,125.1 469.1,118.3 469.5,125.1 469.5,118.2 469.8,125.1 469.3,124.1 469.7,125.2 470.2,124.4 470.2,123.5 470.4,124.4 470.6,125.4 471.1,124.0 471.6,125.0 472.0,124.0 472.5,125.0 473.0,124.3 473.0,125.1 473.0,123.1 473.3,125.1 473.3,123.3 473.7,125.1 473.7,122.8 474.0,125.1 473.4,125.0" fill="none" stroke="#F8766D" stroke-width="1.1" stroke-linejoin="round"/>
<polyline points="244.2,160.3 244.7,164.3 245.1,157.4 245.6,164.8 245.4,162.3 245.4,158.9 245.7,162.3 245.7,160.2 246.1,162.3 246.1,159.7 246.4,162.3 246.1,161.2 246.5,165.3 247.0,160.5 247.4,166.0 247.9,161.7 248.4,164.7 248.8,162.2 249.3,167.5 249.8,162.6 250.2,166.9 250.7,160.5 251.2,166.0 251.6,160.0 252.1,165.8 252.5,162.2 253.0,165.8 253.5,161.5 253.9,166.4 254.4,162.0 254.9,167.8 255.3,160.0 255.8,167.4 256.2,162.1 256.7,167.7 257.2,163.0 257.6,168.0 258.1,161.7 258.6,168.7 259.0,162.7 259.5,168.6 260.0,162.0 260.4,168.4 260.9,162.5 261.3,167.1 261.8,162.2 262.3,167.8 262.7,160.9 263.2,165.3 263.7,162.1 264.1,166.9 264.6,159.0 265.0,165.4 265.5,161.7 266.0,166.5 266.4,162.5 266.9,169.0 267.4,162.1 267.8,169.2 267.8,165.8 267.8,158.9 268.2,165.8 268.2,158.0 268.5,165.8 268.5,158.0 268.8,165.8 268.3,164.6 268.8,169.2 269.2,162.9 269.7,171.1 270.1,165.5 270.6,168.6 271.1,163.4 271.5,168.3 272.0,162.6 272.5,169.6 272.9,164.9 273.4,168.6 273.8,165.7 274.3,169.2 274.8,166.1 275.2,170.1 275.7,165.1 276.2,170.6 276.6,162.9 277.1,169.1 277.5,165.3 278.0,168.9 278.5,165.8 278.9,171.3 279.4,164.0 279.9,169.7 280.3,164.5 280.8,169.1 281.3,164.4 281.3,165.9 281.3,162.3 281.6,165.9 281.6,163.5 282.0,165.9 282.0,163.2 282.3,165.9 281.7,167.8 282.2,164.3 282.6,170.1 283.1,164.3 283.6,168.3 284.0,164.1 284.5,169.9 285.0,164.6 285.4,171.1 285.9,163.1 286.3,170.2 286.8,163.1 287.3,168.1 287.3,159.3 287.5,168.1 287.7,163.5 288.2,167.8 288.7,162.5 289.1,168.0 289.6,163.8 290.1,168.5 290.5,163.3 291.0,166.8 291.4,163.5 291.9,167.6 292.4,164.5 292.8,168.0 293.3,161.7 293.8,167.4 294.2,162.9 294.7,168.4 295.1,161.7 295.6,168.1 296.1,161.1 296.5,167.6 297.0,163.2 297.5,166.6 297.9,161.6 298.4,167.2 298.8,162.8 299.3,168.8 299.8,163.5 300.2,169.0 300.7,165.3 301.2,168.6 301.6,164.2 302.1,168.7 302.6,165.0 303.0,170.1 303.5,165.8 303.9,170.0 304.4,164.6 304.9,172.1 305.3,163.3 305.8,169.8 306.3,165.8 306.7,170.6 307.2,165.2 307.6,172.7 308.1,168.7 308.6,171.3 309.0,165.2 309.5,171.4 310.0,166.1 310.4,171.7 310.9,164.8 311.4,169.5 311.8,165.5 312.3,169.8 312.7,164.5 313.2,170.5 313.7,163.9 314.1,169.7 314.6,164.5 315.1,169.3 315.5,164.2 316.0,168.4 316.4,161.9 316.9,169.6 317.4,164.3 317.8,169.4 318.3,164.8 318.8,169.7 319.2,162.7 319.7,169.9 320.2,161.9 320.6,167.0 321.1,164.0 321.5,165.3 322.0,161.7 322.5,166.0 322.9,163.2 323.4,166.2 323.9,162.6 324.3,166.3 324.8,163.3 325.2,166.1 325.7,163.4 326.2,165.7 326.6,163.4 327.1,166.6 327.6,162.6 328.0,166.9 328.5,163.0 328.9,166.3 328.7,164.5 328.7,162.1 329.1,164.5 329.1,161.6 329.4,164.5 329.4,162.7 329.7,164.5 329.4,163.4 329.9,165.7 330.3,160.8 330.8,165.0 331.3,161.8 331.7,164.9 332.2,162.4 332.7,166.7 333.1,161.9 333.6,164.7 334.0,162.1 334.5,165.4 335.0,160.8 335.4,165.4 335.9,162.8 336.4,166.5 336.8,162.1 337.3,165.0 337.7,160.8 338.2,163.8 338.7,161.9 339.1,164.8 339.6,161.7 340.1,164.9 340.5,161.5 341.0,163.6 341.5,160.9 341.9,163.6 342.4,160.5 342.8,163.4 343.3,161.4 343.8,165.2 344.2,160.5 344.7,163.4 345.2,160.9 345.6,164.1 346.1,161.0 346.5,165.6 347.0,160.9 347.5,164.5 347.9,161.8 348.4,164.9 348.9,161.4 349.3,164.6 349.8,161.1 350.3,165.2 350.7,161.9 351.2,164.7 351.6,161.4 352.1,165.5 352.6,160.9 353.0,164.6 353.5,160.3 354.0,164.4 354.4,160.9 354.9,164.8 355.3,161.5 355.8,164.1 356.3,161.3 356.7,164.3 357.2,161.5 357.7,164.0 358.1,160.5 358.6,163.8 359.0,161.0 359.5,164.7 360.0,160.5 360.4,164.8 360.9,161.0 361.4,164.6 361.8,162.2 361.8,162.8 361.8,151.8 362.2,162.8 362.2,152.3 362.5,162.8 362.5,152.9 362.8,162.8 362.3,164.9 362.8,161.9 363.2,165.2 363.7,161.3 364.1,164.6 364.6,162.3 364.6,163.3 364.6,157.1 365.0,163.3 365.0,156.1 365.3,163.3 365.3,157.4 365.6,163.3 365.1,166.1 365.5,161.8 366.0,165.5 366.5,162.2 366.9,167.3 366.9,165.1 366.9,159.8 367.3,165.1 367.3,159.5 367.6,165.1 367.6,158.8 367.9,165.1 367.4,163.5 367.8,166.5 368.3,163.9 368.8,168.6 369.2,165.5 369.7,168.4 370.2,166.3 370.6,170.1 371.1,166.7 371.6,170.5 372.0,166.2 372.5,172.5 372.9,165.7 373.4,171.2 373.9,166.6 374.3,170.4 374.8,165.2 375.3,170.4 375.7,166.7 376.2,169.9 376.6,165.3 377.1,171.4 377.6,166.3 378.0,169.6 378.5,164.1 379.0,169.7 379.4,164.5 379.9,170.4 380.4,163.9 380.8,171.0 381.3,166.0 381.7,169.8 382.2,163.8 382.7,169.0 383.1,164.1 383.6,171.2 384.1,165.1 384.5,169.1 385.0,164.0 385.4,170.1 385.9,167.7 386.4,173.4 386.8,166.0 387.3,171.8 387.8,165.1 388.2,170.8 388.7,166.3 389.1,170.3 389.6,163.9 390.1,172.4 390.5,166.4 391.0,170.5 391.5,164.1 391.9,168.7 392.4,165.2 392.9,169.7 393.3,164.2 393.8,169.8 394.2,165.2 394.7,170.1 395.2,166.0 395.6,169.3 396.1,164.2 396.6,169.8 397.0,166.0 397.5,171.4 397.9,165.8 398.4,170.0 398.9,165.2 398.6,167.4 398.6,153.5 399.0,167.4 399.0,153.9 399.3,167.4 399.3,152.7 399.6,167.4 399.3,170.0 399.8,165.4 400.3,169.0 400.7,163.1 401.2,170.3 401.7,165.5 402.1,169.0 402.6,164.8 403.0,169.1 403.5,162.9 404.0,168.7 404.4,163.5 404.9,169.1 405.4,165.8 405.8,168.2 406.3,164.7 406.7,169.5 407.2,164.0 407.7,170.7 408.1,163.7 408.6,170.1 409.1,163.5 409.5,169.9 410.0,163.4 410.4,168.0 410.9,163.6 411.4,169.0 411.8,164.0 412.3,167.6 412.8,163.5 413.2,167.4 413.7,163.7 414.2,167.5 414.6,160.3 415.1,167.4 415.5,162.1 416.0,167.1 416.5,161.2 416.9,166.6 417.4,161.6 417.9,167.2 418.3,162.8 418.8,167.9 419.2,163.1 419.7,167.0 420.2,162.3 420.6,167.2 421.1,162.0 421.6,169.7 422.0,164.7 422.5,168.8 423.0,162.8 423.4,167.4 423.9,164.2 424.3,167.6 424.8,163.3 424.8,165.6 424.8,163.3 425.2,165.6 425.2,163.7 425.5,165.6 425.5,163.3 425.8,165.6 425.3,167.2 425.7,164.5 426.2,169.6 426.7,163.1 427.1,169.2 427.6,162.6 428.0,168.8 428.5,163.7 429.0,169.2 429.4,163.5 429.9,166.8 430.4,163.0 430.8,167.5 431.3,163.0 431.8,166.5 432.2,161.7 432.7,168.3 433.1,162.9 433.6,169.1 434.1,161.2 434.5,168.1 435.0,164.9 435.5,169.2 435.9,163.2 436.4,167.7 436.8,163.4 437.3,167.8 437.8,164.0 438.2,169.8 438.7,164.5 439.2,169.0 439.6,163.0 440.1,170.0 440.5,162.8 441.0,169.3 441.5,161.1 441.9,167.9 442.4,162.3 442.9,167.0 443.3,160.7 443.8,167.5 444.3,163.1 444.7,168.0 445.2,160.3 445.6,167.9 446.1,160.3 446.6,168.1 447.0,162.7 447.5,167.8 448.0,159.9 448.4,167.9 448.9,162.2 449.3,165.3 449.1,164.2 449.1,155.7 449.5,164.2 449.5,155.4 449.8,164.2 449.8,155.7 450.1,164.2 449.8,161.9 450.3,167.1 450.7,160.9 451.2,164.7 451.7,161.5 452.1,165.5 452.6,162.3 452.6,163.5 452.6,157.3 452.9,163.5 452.9,156.6 453.3,163.5 453.3,157.0 453.6,163.5 453.1,167.1 453.5,159.9 454.0,167.6 454.4,163.1 454.4,163.9 454.4,151.0 454.8,163.9 454.8,150.9 455.1,163.9 455.1,151.1 455.4,163.9 454.9,167.4 455.4,162.2 455.8,168.0 456.3,163.2 456.1,165.2 456.1,156.0 456.4,165.2 456.4,157.0 456.8,165.2 456.8,155.9 457.1,165.2 456.8,167.9 457.2,165.6 457.7,172.2 458.1,166.0 458.6,169.4 459.1,166.9 459.5,169.8 460.0,163.3 460.0,155.0 460.2,163.3 460.5,171.1 460.9,164.5 461.4,169.5 461.9,163.6 462.3,169.6 462.8,164.5 463.2,168.5 463.7,163.4 464.2,168.6 464.6,164.8 465.1,171.2 465.6,165.5 466.0,172.6 466.5,166.6 466.9,172.4 467.4,167.4 467.9,172.8 468.3,166.5 468.8,172.3 469.3,164.8 469.7,171.7 470.2,165.9 470.6,170.7 471.1,167.3 471.6,172.6 472.0,165.4 472.5,172.5 473.0,165.9 473.4,172.2" fill="none" stroke="#7CAE00" stroke-width="1.1" stroke-linejoin="round"/>
<polyline points="244.2,199.2 244.7,202.8 245.1,200.3 245.6,203.5 245.4,201.6 245.4,195.8 245.7,201.6 245.7,195.3 246.1,201.6 246.1,194.7 246.4,201.6 246.1,200.1 246.5,202.1 247.0,197.6 247.0,192.3 247.2,197.6 247.4,201.6 247.9,199.2 248.4,201.9 248.8,197.7 248.8,201.6 248.8,195.4 249.2,201.6 249.2,194.8 249.5,201.6 249.5,195.9 249.8,201.6 249.3,201.6 249.8,199.2 249.8,192.8 250.0,199.2 250.2,201.2 250.2,195.1 250.4,201.2 250.7,198.5 251.2,202.1 251.2,196.3 251.4,202.1 251.6,197.7 252.1,203.1 252.5,200.0 253.0,202.7 253.5,199.3 253.9,203.6 254.4,200.2 254.9,204.7 255.3,200.8 255.8,204.1 256.2,199.9 256.7,204.1 257.2,200.7 257.6,204.2 258.1,201.1 258.6,205.4 259.0,200.3 259.5,203.1 260.0,200.0 260.0,194.7 260.2,200.0 260.4,203.2 260.9,199.5 261.3,202.6 261.8,200.0 262.3,203.1 262.3,200.2 262.5,203.1 262.7,200.6 263.2,201.5 263.7,199.4 264.1,200.7 264.6,198.1 265.0,201.9 265.5,198.8 266.0,203.0 266.4,199.7 266.9,202.6 267.4,200.4 267.8,204.8 267.8,198.3 268.0,204.8 268.3,201.5 268.8,206.4 269.2,202.5 269.7,205.8 270.1,203.7 270.1,200.6 270.3,203.7 270.6,205.9 271.1,202.6 271.1,197.3 271.3,202.6 270.8,203.9 270.8,197.6 271.2,203.9 271.2,196.5 271.5,203.9 271.5,197.6 271.8,203.9 271.5,206.3 271.5,202.3 271.7,206.3 272.0,202.0 272.5,206.3 272.9,204.1 273.4,207.3 273.8,203.3 273.8,197.8 274.0,203.3 274.3,205.9 274.8,202.7 275.2,206.1 275.7,202.3 276.2,206.5 276.2,199.8 276.4,206.5 276.6,204.3 276.6,199.6 276.8,204.3 277.1,207.2 277.5,204.4 278.0,206.5 278.0,202.9 278.2,206.5 278.5,203.6 278.5,196.6 278.7,203.6 278.9,206.8 279.4,203.3 279.9,205.2 280.3,203.3 280.8,207.3 280.8,202.1 281.0,207.3 281.3,203.1 281.7,206.7 281.7,205.1 281.7,193.5 282.1,205.1 282.1,194.2 282.4,205.1 282.4,192.4 282.7,205.1 282.2,203.0 282.6,206.6 283.1,202.4 283.6,206.2 283.6,202.5 283.8,206.2 284.0,203.7 284.5,204.9 285.0,201.9 285.4,207.0 285.9,201.7 286.3,206.0 286.8,201.6 286.8,195.6 287.0,201.6 287.3,204.5 287.7,202.4 287.7,195.9 287.9,202.4 288.2,205.4 288.7,203.6 289.1,204.8 289.6,203.9 290.1,204.7 290.5,203.8 291.0,206.1 291.4,204.7 291.9,206.3 292.4,204.3 292.8,205.7 292.8,204.9 292.8,194.6 293.2,204.9 293.2,193.8 293.5,204.9 293.5,193.2 293.8,204.9 293.3,204.0 293.8,205.2 294.2,204.3 294.7,205.5 295.1,203.9 295.6,204.9 296.1,203.8 296.5,205.0 297.0,203.6 297.5,204.1 297.9,202.9 298.4,204.7 298.8,203.2 299.3,204.6 299.8,203.0 300.2,204.6 300.2,203.2 300.4,204.6 300.7,203.3 301.2,204.7 301.6,202.9 302.1,204.5 302.6,202.8 303.0,204.6 303.5,202.8 303.9,204.0 304.4,202.1 304.4,199.3 304.6,202.1 304.9,204.1 305.3,202.1 305.8,204.3 305.8,202.6 306.0,204.3 306.3,203.1 306.7,205.3 307.2,203.9 307.6,205.3 308.1,204.0 308.6,205.7 309.0,203.7 309.5,205.3 310.0,203.8 310.4,205.5 310.9,204.0 311.4,204.9 311.8,204.2 312.3,205.9 312.7,204.2 313.2,205.9 313.7,204.6 314.1,205.9 314.6,204.7 315.1,206.3 315.5,204.9 316.0,206.7 316.4,203.2 316.9,207.0 317.4,204.7 317.8,207.9 318.3,205.0 318.3,199.9 318.5,205.0 318.8,207.6 319.2,203.4 319.7,206.6 319.5,204.2 319.5,198.9 319.8,204.2 319.8,199.0 320.2,204.2 320.2,199.1 320.5,204.2 320.2,201.5 320.6,205.7 321.1,201.7 321.5,205.8 322.0,203.0 322.0,198.5 322.2,203.0 322.5,205.5 322.9,202.1 323.4,204.0 323.9,202.2 324.3,204.1 324.8,201.3 325.2,204.4 325.7,201.3 326.2,205.1 326.2,199.7 326.4,205.1 326.6,202.8 327.1,204.2 327.6,202.9 328.0,204.6 328.5,201.7 328.5,198.0 328.7,201.7 328.9,204.2 329.4,201.5 329.4,202.8 329.4,191.9 329.8,202.8 329.8,192.1 330.1,202.8 330.1,192.8 330.4,202.8 329.9,203.3 330.3,199.6 330.8,203.8 331.3,199.6 331.3,194.7 331.5,199.6 331.7,203.2 331.7,197.7 331.9,203.2 332.2,200.3 332.7,202.7 333.1,200.3 333.6,202.2 334.0,200.7 334.5,203.9 334.5,202.0 334.5,193.9 334.9,202.0 334.9,193.7 335.2,202.0 335.2,193.4 335.5,202.0 335.0,200.5 335.4,203.4 335.9,201.0 336.4,204.4 336.8,201.0 337.3,204.9 337.7,202.3 338.2,204.9 338.7,201.7 339.1,205.6 339.6,201.9 340.1,205.2 339.8,201.9 339.8,194.9 340.2,201.9 340.2,194.9 340.5,201.9 340.5,195.0 340.8,201.9 340.5,200.6 341.0,204.3 341.5,201.5 341.9,203.7 342.4,199.9 342.8,204.7 343.3,200.1 343.8,204.2 343.8,201.7 344.0,204.2 344.2,201.1 344.2,194.6 344.4,201.1 344.7,205.4 345.2,202.9 345.2,198.9 345.4,202.9 345.6,206.4 346.1,202.6 346.5,206.1 347.0,203.5 347.5,206.4 347.9,202.7 347.9,196.8 348.1,202.7 348.4,204.4 348.9,200.9 349.3,205.1 349.8,200.6 350.3,203.7 350.7,201.7 351.2,205.0 351.6,201.8 352.1,204.4 352.1,201.8 352.3,204.4 352.6,201.2 353.0,205.7 353.5,202.3 353.5,196.2 353.7,202.3 354.0,203.5 354.4,200.2 354.9,203.6 354.9,197.4 355.1,203.6 354.9,201.9 354.9,191.0 355.2,201.9 355.2,191.1 355.6,201.9 355.6,189.4 355.9,201.9 355.3,200.4 355.8,203.8 356.3,201.5 356.7,203.5 356.5,202.4 356.5,195.9 356.9,202.4 356.9,197.2 357.2,202.4 357.2,195.9 357.5,202.4 357.2,201.4 357.2,195.8 357.4,201.4 357.7,203.2 358.1,201.9 358.6,205.5 359.0,204.2 359.5,205.2 360.0,202.1 360.0,203.6 360.0,190.8 360.3,203.6 360.3,190.9 360.7,203.6 360.7,191.0 361.0,203.6 360.4,207.0 360.9,202.9 361.4,206.2 361.8,202.2 361.8,204.4 361.8,192.5 362.2,204.4 362.2,191.3 362.5,204.4 362.5,192.5 362.8,204.4 362.3,205.9 362.8,202.1 363.2,206.5 363.7,203.5 363.7,198.9 363.9,203.5 364.1,208.1 364.6,204.7 365.1,208.6 365.5,206.0 366.0,209.9 366.5,205.2 366.9,210.5 367.4,207.8 367.8,210.8 368.3,207.8 368.8,210.7 369.2,205.8 369.7,209.3 370.2,207.3 370.2,207.7 370.2,190.2 370.5,207.7 370.5,190.7 370.9,207.7 370.9,189.2 371.2,207.7 370.6,210.7 371.1,206.6 371.6,208.6 371.6,206.6 371.8,208.6 372.0,207.4 372.5,209.0 372.9,207.6 373.4,208.2 373.4,206.7 373.6,208.2 373.9,207.5 374.3,208.9 374.8,207.9 375.3,208.7 375.7,207.6 376.2,208.6 376.6,208.2 377.1,209.4 377.6,208.3 378.0,209.1 378.5,208.1 379.0,208.7 379.4,207.6 379.9,208.9 379.9,206.5 380.1,208.9 380.4,208.5 380.8,209.7 381.3,208.7 381.7,209.9 382.2,208.6 382.7,209.9 383.1,208.7 383.1,209.0 383.1,200.9 383.5,209.0 383.5,199.4 383.8,209.0 383.8,200.5 384.1,209.0 383.6,210.2 384.1,209.3 384.5,210.3 385.0,209.4 385.4,210.4 385.9,209.4 386.4,210.5 386.8,209.3 387.3,211.0 387.8,209.9 388.2,211.0 388.7,210.1 389.1,211.0 389.6,210.1 390.1,211.2 390.5,210.2 391.0,211.2 391.5,210.1 391.9,211.0 392.4,209.3 392.9,210.6 393.3,209.3 393.8,209.7 394.2,208.7 394.7,209.1 395.2,208.3 395.6,210.0 396.1,208.4 396.6,209.7 397.0,208.6 397.5,209.7 397.9,209.0 398.4,211.1 398.9,209.2 398.9,207.7 399.1,209.2 398.6,209.3 398.6,198.5 399.0,209.3 399.0,199.7 399.3,209.3 399.3,198.2 399.6,209.3 399.3,210.5 399.8,208.7 400.3,209.8 400.7,209.1 401.2,209.9 401.7,209.0 402.1,209.8 402.6,208.6 403.0,209.5 403.5,208.1 404.0,209.2 404.4,207.9 404.9,209.8 405.4,208.6 405.8,209.1 406.3,207.5 406.7,208.3 407.2,207.5 407.7,207.8 408.1,206.3 408.6,207.6 409.1,203.7 409.1,199.0 409.3,203.7 409.1,206.7 409.1,200.1 409.4,206.7 409.4,200.2 409.8,206.7 409.8,200.0 410.1,206.7 409.5,206.9 410.0,204.3 410.4,206.2 410.9,205.0 411.4,206.7 411.8,204.0 412.3,205.6 412.3,202.5 412.5,205.6 412.8,202.8 413.2,206.1 413.7,201.7 414.2,205.4 414.2,199.7 414.4,205.4 414.6,201.6 415.1,206.4 415.5,201.0 416.0,204.7 416.5,200.8 416.9,205.9 417.4,201.8 417.4,202.9 417.4,188.2 417.7,202.9 417.7,187.9 418.1,202.9 418.1,187.7 418.4,202.9 417.9,204.3 418.3,202.3 418.8,205.6 418.8,202.6 419.0,205.6 419.2,203.4 419.2,202.4 419.2,194.5 419.6,202.4 419.6,194.1 419.9,202.4 419.9,194.3 420.2,202.4 419.7,204.8 420.2,202.2 420.2,196.7 420.4,202.2 420.6,204.9 421.1,201.6 421.6,202.8 422.0,200.5 422.5,202.7 422.5,201.6 422.5,192.8 422.8,201.6 422.8,193.8 423.2,201.6 423.2,193.9 423.5,201.6 423.0,200.9 423.4,204.3 423.9,200.1 424.3,203.0 424.8,199.8 425.3,202.5 425.7,199.5 426.2,201.3 426.7,198.0 427.1,200.3 427.6,198.2 428.0,201.1 428.5,197.0 428.3,200.7 428.3,195.3 428.6,200.7 428.6,196.0 429.0,200.7 429.0,194.8 429.3,200.7 429.0,199.6 429.0,197.0 429.2,199.6 429.4,195.7 429.9,200.0 430.4,197.8 430.8,202.1 431.3,199.5 431.8,201.8 432.2,198.9 432.7,201.9 433.1,197.4 433.6,202.2 433.6,197.6 433.8,202.2 433.6,200.9 433.6,192.9 434.0,200.9 434.0,192.2 434.3,200.9 434.3,191.7 434.6,200.9 434.1,200.9 434.5,203.3 435.0,200.3 435.5,203.4 435.9,202.7 436.4,205.9 436.4,203.0 436.6,205.9 436.8,202.0 437.3,204.4 437.8,201.8 437.8,198.1 438.0,201.8 438.2,204.5 438.2,200.8 438.4,204.5 438.7,199.7 439.2,203.1 439.2,201.4 439.2,188.3 439.5,201.4 439.5,188.6 439.9,201.4 439.9,189.1 440.2,201.4 439.6,199.8 440.1,201.7 440.5,199.6 441.0,203.7 441.5,200.7 441.5,201.7 441.5,189.5 441.8,201.7 441.8,189.2 442.2,201.7 442.2,189.7 442.5,201.7 441.9,203.5 442.4,199.3 442.9,203.7 443.3,198.9 443.8,203.5 444.3,200.9 444.7,204.6 445.2,199.5 445.6,203.0 446.1,199.9 446.6,203.1 447.0,200.2 447.5,203.4 448.0,199.4 448.4,203.6 448.9,200.7 448.9,194.0 449.1,200.7 449.3,203.3 449.8,199.2 449.8,202.3 449.8,195.1 450.2,202.3 450.2,195.3 450.5,202.3 450.5,195.1 450.8,202.3 450.3,203.3 450.7,202.3 450.7,199.5 450.9,202.3 451.2,205.4 451.7,200.6 452.1,204.0 452.6,201.0 453.1,204.0 453.5,200.8 454.0,204.1 453.7,202.6 453.7,190.1 454.1,202.6 454.1,191.0 454.4,202.6 454.4,190.6 454.7,202.6 454.4,201.3 454.9,205.1 454.9,198.2 455.1,205.1 455.4,202.4 455.8,205.3 455.8,200.3 456.0,205.3 456.3,203.2 456.1,202.8 456.1,189.1 456.4,202.8 456.4,189.2 456.8,202.8 456.8,188.1 457.1,202.8 456.8,206.5 457.2,202.8 457.7,207.0 458.1,205.4 458.6,209.4 458.4,207.4 458.4,193.8 458.7,207.4 458.7,195.3 459.1,207.4 459.1,195.4 459.4,207.4 459.1,205.8 459.5,207.5 460.0,206.1 460.5,207.3 460.9,206.5 461.4,208.1 461.9,206.5 462.3,208.4 462.8,206.9 463.2,208.2 463.2,206.4 463.4,208.2 463.7,207.2 464.2,207.9 464.6,206.4 465.1,207.5 465.6,206.2 466.0,207.5 466.0,204.4 466.2,207.5 466.5,206.2 466.9,207.7 467.4,205.8 467.9,208.1 468.3,206.9 468.8,208.4 469.3,207.6 469.7,208.9 470.2,207.1 470.0,208.3 470.0,207.3 470.3,208.3 470.3,206.4 470.7,208.3 470.7,205.9 471.0,208.3 470.6,209.1 471.1,207.7 471.6,209.4 472.0,207.9 472.5,209.4 473.0,208.1 473.4,209.8" fill="none" stroke="#00BFC4" stroke-width="1.1" stroke-linejoin="round"/>
<polyline points="394.7,248.8 395.2,249.6 395.6,248.7 396.1,249.2 396.6,248.0 397.0,248.8 397.5,247.8 397.9,248.8 398.4,248.0 398.2,248.8 398.2,242.8 398.5,248.8 398.5,243.1 398.9,248.8 398.9,243.9 399.2,248.8 398.9,249.0 399.3,247.9 399.8,248.9 400.3,247.8 400.7,248.8 401.2,247.8 401.2,246.6 401.4,247.8 401.7,248.3 402.1,247.7 402.6,248.4 403.0,247.5 403.5,247.8 404.0,246.7 404.4,249.1 404.4,238.6 404.6,249.1 404.9,244.2 404.9,239.6 405.1,244.2 405.4,247.4 405.4,238.0 405.6,247.4 405.1,247.0 405.1,242.2 405.5,247.0 405.5,241.2 405.8,247.0 405.8,241.3 406.1,247.0 405.8,244.2 406.3,249.3 406.7,245.2 406.7,233.9 406.9,245.2 407.2,250.0 407.7,245.7 407.7,236.2 407.9,245.7 407.4,246.6 407.4,237.6 407.8,246.6 407.8,238.5 408.1,246.6 408.1,238.8 408.4,246.6 408.1,248.2 408.1,238.3 408.3,248.2 408.6,243.4 409.1,247.5 409.1,236.5 409.3,247.5 409.5,244.7 409.5,239.3 409.7,244.7 410.0,247.2 410.4,244.2 410.4,240.0 410.6,244.2 410.9,249.3 410.9,240.3 411.1,249.3 410.9,246.0 410.9,236.7 411.3,246.0 411.3,237.0 411.6,246.0 411.6,236.4 411.9,246.0 411.4,245.2 411.8,248.8 411.8,242.7 412.0,248.8 412.3,245.3 412.8,249.8 413.2,244.4 413.2,245.6 413.2,236.0 413.6,245.6 413.6,237.3 413.9,245.6 413.9,236.6 414.2,245.6 413.7,248.4 414.2,245.5 414.2,235.7 414.4,245.5 414.6,250.5 414.6,245.5 414.6,238.1 415.0,245.5 415.0,237.8 415.3,245.5 415.3,238.8 415.6,245.5 415.1,247.6 415.1,242.6 415.3,247.6 415.5,251.6 415.5,242.1 415.7,251.6 416.0,245.6 416.0,237.8 416.2,245.6 416.0,245.3 416.0,236.1 416.4,245.3 416.4,235.1 416.7,245.3 416.7,235.9 417.0,245.3 416.5,250.1 416.5,239.2 416.7,250.1 416.9,248.4 417.4,251.0 417.4,245.2 417.4,238.4 417.7,245.2 417.7,239.1 418.1,245.2 418.1,238.3 418.4,245.2 417.9,247.2 418.3,248.7 418.8,246.9 419.2,250.1 419.0,245.0 419.0,234.7 419.4,245.0 419.4,234.5 419.7,245.0 419.7,235.6 420.0,245.0 419.7,247.8 420.2,251.1 420.2,243.6 420.4,251.1 420.6,243.8 420.6,232.9 420.8,243.8 420.6,244.9 420.6,237.4 421.0,244.9 421.0,237.3 421.3,244.9 421.3,238.6 421.6,244.9 421.1,247.5 421.1,239.6 421.3,247.5 421.6,242.7 421.6,232.8 421.8,242.7 422.0,247.3 422.0,244.7 422.0,235.1 422.4,244.7 422.4,236.4 422.7,244.7 422.7,235.9 423.0,244.7 422.5,244.5 423.0,248.9 423.0,244.0 423.2,248.9 423.4,244.5 423.9,247.2 423.9,237.0 424.1,247.2 424.3,245.8 424.8,248.2 424.8,242.9 425.0,248.2 424.8,244.5 424.8,238.2 425.2,244.5 425.2,238.8 425.5,244.5 425.5,238.9 425.8,244.5 425.3,243.6 425.7,248.4 425.7,237.8 425.9,248.4 426.2,241.5 426.2,233.1 426.4,241.5 426.7,249.0 426.7,240.9 426.9,249.0 427.1,244.3 427.1,238.0 427.3,244.3 427.6,247.9 427.6,244.6 427.6,237.4 427.9,244.6 427.9,236.9 428.3,244.6 428.3,236.3 428.6,244.6 428.0,244.3 428.5,248.1 428.5,239.6 428.7,248.1 429.0,243.5 429.4,247.8 429.4,239.6 429.6,247.8 429.9,245.4 429.9,244.7 429.9,238.8 430.2,244.7 430.2,238.8 430.6,244.7 430.6,239.2 430.9,244.7 430.4,250.1 430.8,245.5 430.8,234.3 431.0,245.5 431.3,247.8 431.8,243.7 431.8,244.7 431.8,234.9 432.1,244.7 432.1,233.4 432.5,244.7 432.5,233.7 432.8,244.7 432.2,247.7 432.7,245.9 433.1,250.0 433.1,238.7 433.3,250.0 433.6,245.3 434.1,249.8 434.1,240.2 434.3,249.8 434.1,244.8 434.1,238.0 434.4,244.8 434.4,237.8 434.8,244.8 434.8,238.2 435.1,244.8 434.5,242.3 435.0,246.1 435.5,242.5 435.5,231.8 435.7,242.5 435.9,247.2 435.9,241.9 436.1,247.2 436.4,243.4 436.4,235.6 436.6,243.4 436.4,244.9 436.4,236.3 436.7,244.9 436.7,236.2 437.1,244.9 437.1,236.0 437.4,244.9 436.8,248.8 436.8,244.2 437.0,248.8 437.3,243.3 437.3,233.1 437.5,243.3 437.8,247.5 437.8,239.8 438.0,247.5 438.2,242.7 438.2,233.7 438.4,242.7 438.7,248.5 438.7,240.7 438.9,248.5 438.7,245.1 438.7,238.8 439.0,245.1 439.0,238.2 439.4,245.1 439.4,237.4 439.7,245.1 439.2,244.2 439.2,235.3 439.4,244.2 439.6,247.8 439.6,239.8 439.8,247.8 440.1,245.0 440.1,238.5 440.3,245.0 440.5,248.8 440.5,245.2 440.5,236.5 440.9,245.2 440.9,236.0 441.2,245.2 441.2,235.7 441.5,245.2 441.0,244.4 441.0,235.7 441.2,244.4 441.5,248.5 441.5,241.9 441.7,248.5 441.9,245.5 441.9,240.1 442.1,245.5 442.4,250.6 442.4,241.6 442.6,250.6 442.9,248.0 442.9,241.0 443.1,248.0 442.9,245.3 442.9,236.7 443.2,245.3 443.2,236.5 443.6,245.3 443.6,237.6 443.9,245.3 443.3,252.2 443.3,246.1 443.5,252.2 443.8,246.3 444.3,249.0 444.3,244.4 444.5,249.0 444.7,241.7 444.7,233.9 444.9,241.7 445.2,246.3 445.2,237.2 445.4,246.3 444.9,245.4 444.9,227.3 445.3,245.4 445.3,227.9 445.6,245.4 445.6,226.9 445.9,245.4 445.6,243.8 445.6,236.1 445.8,243.8 446.1,246.4 446.6,241.9 446.6,232.5 446.8,241.9 447.0,246.9 447.0,240.4 447.2,246.9 446.8,245.5 446.8,235.8 447.2,245.5 447.2,236.7 447.5,245.5 447.5,237.0 447.8,245.5 447.5,242.1 448.0,246.7 448.4,244.1 448.9,248.2 449.3,243.9 449.3,236.9 449.5,243.9 449.1,245.8 449.1,238.8 449.5,245.8 449.5,237.5 449.8,245.8 449.8,237.6 450.1,245.8 449.8,249.2 450.3,245.0 450.7,250.4 451.2,245.3 451.7,249.1 451.7,241.4 451.9,249.1 452.1,245.0 452.1,246.1 452.1,234.5 452.5,246.1 452.5,234.6 452.8,246.1 452.8,235.0 453.1,246.1 452.6,249.6 452.6,240.6 452.8,249.6 453.1,246.1 453.5,250.8 454.0,244.4 454.0,237.5 454.2,244.4 453.7,246.3 453.7,237.6 454.1,246.3 454.1,237.8 454.4,246.3 454.4,238.4 454.7,246.3 454.4,249.9 454.4,240.4 454.6,249.9 454.9,245.6 454.9,238.8 455.1,245.6 455.4,250.5 455.8,245.2 456.3,250.6 456.1,246.6 456.1,236.9 456.4,246.6 456.4,236.2 456.8,246.6 456.8,235.8 457.1,246.6 456.8,244.8 456.8,235.7 457.0,244.8 457.2,250.9 457.7,246.9 458.1,251.4 458.1,244.6 458.3,251.4 458.6,248.4 459.1,249.9 459.5,249.0 460.0,249.5 460.5,248.4 460.9,249.9 461.4,248.5 461.9,249.3 462.3,248.3 462.8,249.1 463.2,248.4 463.7,249.1 464.2,248.4 464.6,249.1 465.1,248.0 465.6,249.5 466.0,248.5 466.5,249.4 466.9,248.5 467.4,249.3 467.9,248.9 468.3,249.7 468.8,248.6 469.3,248.9 469.7,247.1 470.2,247.2 470.6,245.8 471.1,246.0 471.1,244.6 471.3,246.0 471.6,245.3 471.6,243.7 471.8,245.3 472.0,246.8 472.0,245.7 472.2,246.8 472.5,246.9 473.0,248.3 473.4,247.9" fill="none" stroke="#C77CFF" stroke-width="1.1" stroke-linejoin="round"/>
<polyline points="506.2,102.1 506.7,106.1 507.1,102.3 507.6,104.0 508.1,101.7 508.5,104.1 509.0,100.2 509.4,102.8 509.9,101.5 510.4,103.9 510.8,100.1 511.3,104.7 511.8,101.3 512.2,103.8 512.7,100.7 513.2,102.7 513.6,100.3 514.1,103.3 514.5,101.9 515.0,104.0 515.5,101.1 515.9,104.1 516.4,100.2 516.9,104.1 517.3,100.1 517.8,103.8 518.2,101.2 518.7,104.4 519.2,102.9 519.6,106.8 520.1,102.4 520.6,105.5 521.0,103.9 521.5,106.4 522.0,104.2 522.4,108.3 522.9,103.4 523.3,106.4 523.8,104.2 524.3,107.3 524.7,103.7 525.2,104.9 525.7,101.2 526.1,104.6 526.6,100.9 527.0,104.1 527.5,102.0 528.0,105.1 528.4,100.1 528.9,101.9 529.4,100.1 529.8,104.1 530.3,101.8 530.8,106.6 531.2,105.1 531.7,109.3 532.1,107.4 532.6,113.4 533.1,111.8 533.5,116.4 534.0,115.1 534.5,116.8 534.9,112.4 535.4,115.8 535.8,112.4 536.3,113.9 536.8,110.1 537.2,113.3 537.7,109.8 538.2,111.0 538.6,108.4 539.1,111.7 539.5,109.1 540.0,110.9 540.5,107.2 540.9,110.7 541.4,107.9 541.9,110.6 542.3,108.2 542.8,110.7 543.3,107.9 543.7,111.7 544.2,109.2 544.6,112.6 545.1,108.5 545.6,112.1 546.0,108.4 546.5,111.6 547.0,108.9 547.4,111.6 547.9,108.3 548.3,113.2 548.8,110.8 549.3,112.6 549.7,109.5 550.2,113.1 550.7,108.3 551.1,110.8 551.6,107.6 552.1,108.9 552.5,105.8 553.0,109.2 553.4,103.8 553.9,107.0 554.4,104.8 554.8,106.3 555.3,105.0 555.8,107.4 556.2,103.6 556.7,106.7 557.1,103.8 557.6,106.0 558.1,103.2 558.5,106.9 559.0,104.3 559.5,107.5 559.9,104.8 560.4,108.2 560.8,105.4 561.3,107.8 561.8,106.1 562.2,108.3 562.7,106.5 563.2,108.8 563.6,108.1 564.1,110.4 564.6,107.7 565.0,108.9 565.5,106.4 565.9,108.7 566.4,106.7 566.9,109.9 567.3,106.6 567.8,109.7 568.3,106.8 568.7,112.0 569.2,106.3 569.6,110.9 570.1,109.3 570.6,112.0 571.0,109.2 571.5,111.8 572.0,108.0 572.4,110.4 572.9,107.8 573.4,110.6 573.8,107.9 574.3,111.3 574.7,106.9 575.2,109.1 575.7,106.5 576.1,110.4 576.6,106.7 577.1,110.0 577.5,107.0 578.0,110.5 578.4,109.3 578.9,112.4 579.4,107.8 579.8,110.9 580.3,109.6 580.8,112.2 581.2,110.0 581.7,113.5 582.2,110.2 582.6,113.0 583.1,110.3 583.5,113.8 584.0,109.0 584.5,112.0 584.9,108.0 585.4,110.7 585.9,105.6 586.3,108.5 586.8,104.7 587.2,107.6 587.7,103.9 588.2,106.9 588.6,103.0 589.1,104.2 589.6,99.9 590.0,104.2 590.5,101.3 590.9,105.0 591.4,102.3 591.9,104.9 592.3,101.3 592.8,106.1 593.3,102.4 593.7,104.8 594.2,102.2 594.7,105.0 595.1,104.0 595.6,107.7 596.0,102.8 596.5,106.3 597.0,104.3 597.4,106.0 597.9,103.2 598.4,106.6 598.8,102.4 599.3,107.8 599.7,103.8 600.2,108.0 600.7,104.5 601.1,106.9 601.6,103.2 602.1,104.2 602.5,101.4 603.0,105.8 603.5,102.7 603.9,105.9 604.4,104.0 604.8,107.8 605.3,104.5 605.8,107.4 606.2,103.2 606.7,106.6 607.2,102.8 607.6,106.3 608.1,102.3 608.5,107.2 609.0,103.6 609.5,105.5 609.9,103.7 610.4,106.5 610.9,103.9 611.3,108.9 611.8,105.3 612.3,109.7 612.7,106.5 613.2,109.6 613.6,105.3 614.1,109.0 614.6,104.8 615.0,108.6 615.5,105.2 616.0,109.3 616.4,106.2 616.9,109.2 617.3,106.6 617.8,109.4 618.3,107.2 618.7,109.9 619.2,106.5 619.7,109.6 620.1,106.2 620.6,109.8 621.0,105.0 621.5,107.9 622.0,106.1 622.4,108.9 622.9,106.9 623.4,110.5 623.8,107.2 624.3,110.8 624.8,108.2 625.2,111.7 625.7,108.9 626.1,112.5 626.6,109.0 627.1,112.6 627.5,110.2 628.0,112.7 628.5,111.1 628.9,113.1 629.4,111.6 629.8,116.0 630.3,112.3 630.8,115.0 631.2,112.1 631.7,115.0 632.2,111.6 632.6,115.3 633.1,112.4 633.6,114.9 634.0,111.4 634.5,114.3 634.9,111.6 635.4,115.0 635.9,112.8 636.3,115.1 636.8,111.2 637.3,113.5 637.7,110.9 638.2,115.0 638.6,111.6 639.1,114.9 639.6,111.6 640.0,114.6 640.5,113.1 641.0,114.5 641.4,111.8 641.9,114.1 642.4,111.8 642.8,114.8 643.3,111.2 643.7,114.4 644.2,111.8 644.7,115.0 645.1,110.8 645.6,115.0 646.1,111.5 646.5,114.6 647.0,112.3 647.4,115.8 647.9,112.3 648.4,114.1 648.8,112.3 649.3,115.7 649.8,112.3 650.2,113.9 650.7,111.4 651.1,114.3 651.6,111.8 652.1,114.9 652.5,112.3 653.0,116.4 653.5,112.4 653.9,116.8 654.4,114.8 654.9,118.4 655.3,114.5 655.8,118.6 656.2,115.6 656.7,117.0 657.2,113.6 657.6,115.2 658.1,110.2 658.6,112.6 659.0,108.3 659.5,114.3 659.9,111.0 660.4,113.3 660.9,110.1 661.3,114.3 661.8,110.0 662.3,113.3 662.7,112.0 663.2,116.3 663.7,113.6 664.1,114.8 664.6,111.8 665.0,116.7 665.5,113.1 666.0,118.1 666.4,114.5 666.9,118.4 667.4,115.2 667.8,119.4 668.3,114.9 668.7,119.0 669.2,115.4 669.7,118.9 670.1,114.0 670.6,118.7 671.1,116.0 671.5,117.6 672.0,114.6 672.4,115.9 672.9,112.8 673.4,116.9 673.8,114.5 674.3,116.2 674.8,111.6 675.2,116.3 675.7,111.3 676.2,113.7 676.6,110.6 677.1,111.7 677.5,108.5 678.0,111.9 678.5,108.2 678.9,109.5 679.4,107.8 679.9,108.8 680.3,104.7 680.8,108.0 681.2,103.5 681.7,106.8 682.2,104.4 682.6,108.1 683.1,104.5 683.6,107.1 684.0,103.2 684.5,106.1 685.0,103.1 685.4,105.8 685.9,103.2 686.3,106.9 686.8,103.8 687.3,105.9 687.7,103.4 688.2,106.2 688.7,103.5 689.1,107.9 689.6,105.5 690.0,109.3 690.5,104.2 691.0,107.0 691.4,103.6 691.9,107.6 692.4,103.1 692.8,107.7 693.3,104.4 693.8,108.3 694.2,105.9 694.7,109.2 695.1,104.4 695.6,107.3 696.1,105.3 696.5,107.8 697.0,105.9 697.5,107.6 697.9,103.6 698.4,106.8 698.8,103.2 699.3,106.9 699.8,104.8 700.2,107.2 700.7,104.0 701.2,109.1 701.6,104.6 702.1,108.7 702.5,104.9 703.0,107.4 703.5,104.5 703.9,108.8 704.4,106.0 704.9,108.6 705.3,105.3 705.8,108.1 706.3,104.7 706.7,108.0 707.2,105.4 707.6,107.6 708.1,104.1 708.6,108.9 709.0,107.1 709.5,108.2 710.0,106.8 710.4,110.8 710.9,107.8 711.3,111.2 711.8,108.7 712.3,111.5 712.7,108.7 713.2,112.4 713.7,111.7 714.1,114.2 714.6,111.2 715.1,114.5 715.5,111.7 716.0,116.5 716.4,114.1 716.9,116.5 717.4,114.0 717.8,117.0 718.3,115.2 718.8,117.2 719.2,115.1 719.7,119.4 720.1,115.0 720.6,118.4 721.1,114.6 721.5,118.3 722.0,113.9 722.5,117.9 722.9,114.7 723.4,117.6 723.9,112.9 724.3,115.0 724.8,110.7 725.2,113.4 725.7,108.9 726.2,112.1 726.6,110.4 727.1,112.0 727.6,108.5 728.0,111.4 728.5,108.3 728.9,111.1 729.4,108.6 729.9,113.0 730.3,110.6 730.8,114.3 731.3,109.9 731.7,114.3 732.2,110.0 732.6,114.5 733.1,110.4 733.6,115.0 734.0,111.3 734.5,115.3 735.0,112.5 735.4,114.6" fill="none" stroke="#F8766D" stroke-width="1.1" stroke-linejoin="round"/>
<polyline points="506.2,146.5 506.7,150.6 507.1,147.0 507.6,152.3 508.1,146.1 508.5,151.0 509.0,146.1 509.4,149.6 509.9,146.6 510.4,150.7 510.8,147.8 511.3,150.7 511.8,145.7 512.2,150.0 512.7,146.5 513.2,153.4 513.6,148.4 514.1,154.9 514.5,150.7 514.5,145.1 514.7,150.7 515.0,152.6 515.5,150.0 515.9,153.0 516.4,149.1 516.9,155.7 517.3,149.0 517.8,152.5 518.2,150.6 518.7,155.3 519.2,149.4 519.6,155.3 520.1,151.1 520.6,154.7 521.0,150.2 521.5,155.1 522.0,147.9 522.4,154.9 522.9,148.9 523.3,155.7 523.8,149.7 524.3,155.1 524.7,147.5 525.2,152.3 525.7,150.3 526.1,155.4 526.6,150.4 527.0,156.6 527.5,151.7 528.0,156.4 528.0,148.7 528.2,156.4 528.4,150.5 528.9,156.2 529.4,150.8 529.8,157.3 530.3,154.0 530.8,158.2 531.2,154.3 531.7,157.3 532.1,154.4 532.6,160.6 533.1,155.0 533.5,158.5 534.0,152.4 534.5,157.0 534.9,151.1 535.4,155.3 535.8,150.0 536.3,153.9 536.8,146.3 537.2,151.6 537.7,148.0 538.2,150.9 538.6,145.7 538.6,141.5 538.8,145.7 539.1,151.9 539.5,148.8 540.0,156.6 540.5,149.9 540.9,154.3 541.4,153.4 541.9,157.4 542.3,152.3 542.8,158.3 543.3,152.6 543.7,160.0 544.2,154.2 544.6,159.3 545.1,153.4 545.6,157.3 546.0,154.1 546.5,158.1 547.0,154.5 547.4,159.9 547.9,154.0 548.3,158.3 548.8,150.3 549.3,157.1 549.7,149.8 550.2,153.5 550.7,145.2 551.1,151.1 551.6,144.6 552.1,151.7 552.5,145.0 553.0,150.8 553.4,145.1 553.9,151.1 554.4,147.8 554.8,152.5 555.3,149.4 555.8,152.3 556.2,146.0 556.7,152.0 557.1,149.6 557.6,151.4 558.1,146.1 558.5,151.3 559.0,147.8 559.5,151.6 559.5,142.7 559.7,151.6 559.9,145.9 560.4,153.2 560.8,149.9 561.3,154.3 561.8,151.1 562.2,154.7 562.7,151.3 563.2,156.5 563.2,151.5 563.4,156.5 563.6,149.1 564.1,156.8 564.6,152.4 565.0,158.1 565.5,152.7 565.9,156.2 566.4,151.6 566.9,157.8 567.3,154.9 567.8,159.0 568.3,153.1 568.7,156.8 569.2,150.8 569.6,157.6 570.1,152.9 570.6,158.0 571.0,153.0 571.5,159.2 572.0,154.7 572.4,156.4 572.9,152.1 573.4,158.2 573.8,154.4 574.3,159.8 574.7,153.5 575.2,159.8 575.7,151.7 576.1,158.2 576.6,153.2 577.1,157.8 577.5,153.7 578.0,163.1 578.4,155.9 578.9,161.2 579.4,155.6 579.8,159.8 580.3,155.8 580.8,159.1 581.2,155.7 581.7,156.6 582.2,152.0 582.6,153.9 583.1,151.4 583.5,156.3 584.0,150.6 584.5,155.9 584.9,150.4 585.4,152.1 585.9,148.7 586.3,152.8 586.8,149.3 587.2,156.2 587.7,151.5 588.2,156.8 588.6,150.1 589.1,156.8 589.6,148.7 590.0,154.2 590.5,150.2 590.9,151.2 591.4,146.3 591.9,151.6 592.3,147.7 592.8,152.4 593.3,148.5 593.7,152.9 594.2,148.0 594.7,151.9 595.1,145.0 595.6,151.3 596.0,147.3 596.5,152.2 597.0,145.9 597.4,152.8 597.9,149.2 598.4,153.7 598.8,147.6 599.3,154.8 599.7,149.6 600.2,155.4 600.7,148.9 601.1,152.1 601.6,148.3 602.1,152.9 602.5,148.9 603.0,152.6 603.5,146.1 603.9,152.3 604.4,146.6 604.8,152.5 605.3,149.8 605.8,153.7 606.2,150.3 606.7,155.5 606.7,148.6 606.9,155.5 607.2,149.1 607.6,153.3 608.1,150.3 608.5,154.4 609.0,149.8 609.5,156.9 609.9,152.1 610.4,157.0 610.9,152.7 611.3,156.8 611.8,151.0 612.3,154.3 612.7,150.2 613.2,155.5 613.6,152.7 614.1,157.7 614.6,151.3 615.0,156.8 615.5,150.4 616.0,155.2 616.4,152.2 616.9,156.4 617.3,150.1 617.8,157.1 618.3,151.4 618.7,155.8 619.2,150.8 619.7,154.8 620.1,151.2 620.6,154.2 621.0,149.2 621.5,153.4 622.0,149.7 622.4,155.7 622.9,147.6 623.4,152.2 623.8,148.1 624.3,155.3 624.8,150.5 625.2,156.3 625.7,154.1 626.1,159.8 626.6,154.0 627.1,161.4 627.5,155.3 628.0,160.5 628.5,157.5 628.9,161.0 629.4,154.8 629.8,159.5 630.3,156.2 630.8,161.4 631.2,156.4 631.7,160.0 632.2,154.5 632.6,158.4 633.1,154.5 633.6,159.5 634.0,153.7 634.5,158.4 634.9,152.7 635.4,159.9 635.9,153.0 636.3,157.4 636.8,152.5 637.3,158.3 637.7,154.6 638.2,158.6 638.6,154.1 639.1,158.0 639.6,153.2 640.0,158.0 640.5,155.0 641.0,159.1 641.4,154.5 641.9,161.3 642.4,154.8 642.8,163.0 643.3,158.3 643.7,161.8 644.2,156.7 644.7,158.4 645.1,152.6 645.6,155.7 646.1,153.9 646.5,158.8 647.0,152.2 647.4,159.9 647.9,153.6 648.4,158.8 648.8,153.0 649.3,157.2 649.8,157.0 649.8,157.6 649.8,155.8 650.1,157.6 650.1,154.7 650.5,157.6 650.5,154.8 650.8,157.6 650.2,162.2 650.7,155.8 651.1,160.2 651.6,157.3 652.1,160.1 652.5,156.1 653.0,160.4 653.5,156.6 653.9,159.9 654.4,156.1 654.9,160.6 655.3,155.2 655.8,161.3 656.2,154.5 656.7,159.1 657.2,153.2 657.6,158.4 658.1,153.7 658.6,158.2 659.0,154.1 659.5,159.3 659.9,155.5 660.4,159.8 660.9,154.0 660.6,157.1 660.6,147.6 661.0,157.1 661.0,147.2 661.3,157.1 661.3,146.6 661.6,157.1 661.3,157.2 661.8,155.7 662.3,159.9 662.7,155.2 663.2,160.5 663.7,155.1 664.1,161.4 664.6,155.3 665.0,160.1 665.5,155.4 666.0,160.4 666.4,154.0 666.9,160.2 667.4,153.8 667.8,159.1 668.3,153.9 668.7,160.6 669.2,155.0 669.7,161.1 670.1,156.3 670.6,159.5 671.1,156.2 671.5,158.2 672.0,151.9 672.4,157.1 672.9,154.0 673.4,156.8 673.8,154.7 674.3,156.5 674.1,154.6 674.1,150.6 674.4,154.6 674.4,152.3 674.8,154.6 674.8,151.5 675.1,154.6 674.8,148.4 675.2,154.3 675.7,150.4 676.2,153.8 676.6,150.7 677.1,156.9 677.5,149.7 678.0,154.8 678.5,147.7 678.9,153.4 679.4,148.6 679.9,153.2 680.3,147.8 680.8,153.4 681.2,150.2 681.7,154.4 682.2,149.0 682.6,151.5 683.1,146.1 683.6,151.7 684.0,145.4 684.5,150.1 685.0,145.9 685.4,153.5 685.9,148.1 686.3,153.9 686.8,149.7 687.3,152.4 687.7,148.2 688.2,151.7 688.7,147.7 689.1,151.7 689.6,148.7 690.0,152.0 690.5,148.6 691.0,152.8 691.4,149.0 691.9,152.8 692.4,146.9 692.8,152.8 693.3,147.3 693.8,153.2 694.2,148.0 694.7,153.1 695.1,147.4 695.6,150.1 696.1,147.1 696.5,152.7 697.0,147.2 697.5,152.1 697.9,146.3 697.9,141.9 698.1,146.3 698.4,151.9 698.8,146.9 699.3,153.4 699.8,147.6 700.2,152.5 700.7,148.8 701.2,152.4 701.6,149.9 702.1,151.7 702.5,147.7 703.0,151.6 703.5,148.6 703.9,150.8 704.4,146.6 704.9,152.4 705.3,149.5 705.8,153.9 706.3,150.7 706.7,157.1 707.2,151.8 707.6,153.8 708.1,149.4 708.6,155.2 709.0,148.1 709.5,155.3 710.0,151.3 710.4,159.4 710.9,151.7 711.3,156.4 711.8,151.6 712.3,157.5 712.7,150.7 713.2,156.0 713.7,152.2 714.1,158.3 714.6,152.2 715.1,159.8 715.5,153.4 716.0,156.1 716.0,150.9 716.2,156.1 716.4,153.3 716.9,158.2 717.4,154.9 717.8,160.9 718.3,154.9 718.8,159.5 719.2,155.4 719.7,159.2 720.1,156.5 720.6,162.1 721.1,156.3 721.5,161.5 722.0,157.0 722.5,160.2 722.9,155.4 723.4,162.7 723.9,158.2 724.3,162.7 724.8,156.8 725.2,160.0 725.7,156.3 726.2,160.9 726.6,156.7 727.1,160.5 727.6,154.4 728.0,159.8 728.5,155.6 728.9,160.8 729.4,157.2 729.9,160.1 730.3,155.0 730.8,161.6 731.3,153.3 731.7,160.5 732.2,155.8 732.6,161.0 733.1,156.7 733.6,161.8 734.0,155.0 734.5,162.6 735.0,156.7 735.4,160.7" fill="none" stroke="#7CAE00" stroke-width="1.1" stroke-linejoin="round"/>
<polyline points="506.2,179.9 506.7,182.3 507.1,178.5 507.6,181.8 508.1,177.6 508.5,181.8 509.0,178.6 509.4,182.8 509.9,178.9 510.4,183.2 510.8,179.7 511.3,182.8 511.8,179.6 512.2,183.1 512.7,178.8 513.2,182.6 513.6,180.5 514.1,184.1 514.5,181.0 515.0,186.6 515.5,182.7 515.9,186.4 516.4,181.3 516.9,185.7 517.3,181.6 517.8,186.9 518.2,182.8 518.7,185.5 519.2,183.2 519.6,186.9 520.1,182.3 520.6,185.8 521.0,180.7 521.5,185.6 522.0,181.1 522.4,185.7 522.9,182.5 523.3,185.6 523.8,182.0 524.3,186.1 524.7,183.2 525.2,185.9 525.7,180.5 526.1,183.4 526.6,179.4 527.0,182.0 527.5,178.9 528.0,180.8 528.4,178.3 528.9,184.0 529.4,180.4 529.8,185.8 530.3,183.4 530.8,186.3 531.2,183.7 531.7,189.0 532.1,185.9 532.6,189.9 533.1,188.1 533.5,192.9 534.0,190.3 534.5,193.5 534.9,190.1 535.4,192.6 535.8,189.4 536.3,191.8 536.8,186.5 537.2,189.7 537.7,186.3 538.2,190.1 538.6,187.7 539.1,189.9 539.5,185.2 540.0,189.9 540.5,185.8 540.9,190.2 541.4,185.4 541.9,188.3 542.3,186.2 542.8,189.8 543.3,185.5 543.7,188.3 544.2,187.1 544.6,190.4 545.1,186.1 545.6,192.0 546.0,187.0 546.5,192.6 547.0,188.2 547.4,193.8 547.9,191.5 548.3,194.7 548.8,189.1 549.3,190.9 549.7,188.1 550.2,191.8 550.7,185.6 551.1,188.6 551.6,184.6 552.1,187.9 552.5,184.1 553.0,189.2 553.4,184.4 553.9,188.2 554.4,184.7 554.8,187.8 555.3,184.7 555.8,187.3 556.2,185.0 556.7,188.0 557.1,185.4 557.6,187.1 558.1,183.6 558.5,185.6 559.0,183.7 559.5,187.7 559.9,184.0 560.4,187.2 560.8,183.0 561.3,187.3 561.8,183.5 562.2,188.8 562.7,185.0 563.2,186.1 563.6,184.9 564.1,189.3 564.6,184.4 565.0,186.9 565.5,183.3 565.9,186.6 566.4,183.4 566.9,188.4 567.3,185.0 567.8,187.5 568.3,183.1 568.7,186.5 569.2,182.4 569.6,187.8 570.1,182.2 570.6,185.5 571.0,183.0 571.5,187.6 572.0,182.2 572.4,186.8 572.9,183.8 573.4,187.3 573.8,183.0 574.3,186.2 574.7,182.5 575.2,185.8 575.7,183.4 576.1,186.7 576.6,184.2 577.1,188.9 577.5,186.5 578.0,188.0 578.4,184.5 578.9,186.5 579.4,185.6 579.8,187.9 580.3,185.1 580.8,188.4 581.2,184.4 581.7,187.5 582.2,183.4 582.6,186.8 583.1,183.6 583.5,185.6 584.0,182.6 584.5,186.4 584.9,182.8 585.4,186.0 585.9,183.4 586.3,185.0 586.8,182.6 587.2,185.6 587.7,182.9 588.2,184.0 588.6,181.2 589.1,184.3 589.6,181.3 590.0,184.1 590.5,180.2 590.9,184.9 591.4,179.9 591.9,183.8 592.3,180.0 592.8,182.4 593.3,178.2 593.7,182.6 594.2,179.5 594.7,184.2 595.1,180.9 595.6,184.3 596.0,182.2 596.5,185.4 597.0,182.0 597.4,186.9 597.9,183.8 598.4,187.8 598.8,182.6 599.3,186.0 599.7,181.1 600.2,184.6 600.7,180.3 601.1,185.4 601.6,184.6 602.1,188.9 602.5,184.3 603.0,189.0 603.5,183.5 603.9,186.1 604.4,183.5 604.8,188.1 605.3,183.8 605.8,186.5 606.2,181.5 606.7,185.7 607.2,182.0 607.6,185.4 608.1,181.5 608.5,185.1 609.0,182.4 609.5,184.3 609.9,181.4 610.4,187.7 610.9,182.2 611.3,186.8 611.8,182.5 612.3,185.6 612.7,182.6 613.2,185.9 613.6,180.1 614.1,184.7 614.6,180.4 615.0,185.4 615.5,181.5 616.0,186.0 616.4,181.1 616.9,186.8 617.3,183.0 617.8,185.8 618.3,183.7 618.7,186.9 619.2,181.6 619.7,184.7 620.1,181.6 620.6,184.4 621.0,182.2 621.5,185.5 622.0,182.5 622.4,186.1 622.9,180.8 623.4,184.4 623.8,181.4 624.3,184.6 624.8,180.5 625.2,184.9 625.7,182.4 626.1,185.2 626.6,184.4 627.1,188.3 627.5,185.4 628.0,188.9 628.5,186.1 628.9,191.0 629.4,188.7 629.8,192.1 630.3,189.2 630.8,194.1 631.2,189.4 631.7,192.5 632.2,190.4 632.6,194.3 633.1,192.3 633.6,196.0 634.0,193.3 634.5,197.5 634.9,194.4 635.4,198.0 635.9,193.6 636.3,197.1 636.8,194.5 637.3,197.3 637.7,196.0 638.2,197.7 638.6,194.0 639.1,197.9 639.6,193.3 640.0,198.2 640.5,195.2 641.0,196.5 641.4,192.7 641.9,196.1 642.4,192.2 642.8,196.5 643.3,194.6 643.7,197.6 644.2,193.0 644.7,195.2 645.1,192.3 645.6,194.8 646.1,192.1 646.5,195.8 647.0,192.9 647.4,195.4 647.9,193.5 648.4,195.8 648.8,193.1 649.3,196.4 649.8,190.7 650.2,195.9 650.7,191.1 651.1,195.0 651.6,191.6 652.1,195.5 652.5,194.1 653.0,196.5 653.5,195.2 653.9,199.0 654.4,195.0 654.9,196.6 655.3,193.2 655.8,197.4 656.2,191.8 656.7,194.8 657.2,192.8 657.6,193.8 658.1,191.4 658.6,193.9 659.0,189.5 659.5,192.3 659.9,186.9 660.4,192.7 660.9,191.0 661.3,193.3 661.8,192.0 662.3,195.7 662.7,192.3 663.2,195.9 663.7,192.2 664.1,195.8 664.6,191.7 665.0,196.6 665.5,192.7 666.0,196.5 666.4,194.1 666.9,197.7 667.4,192.6 667.8,197.4 668.3,192.1 668.7,195.2 669.2,192.8 669.7,196.5 670.1,191.7 670.6,194.9 671.1,190.8 671.5,195.3 672.0,191.9 672.4,194.7 672.9,190.6 673.4,194.6 673.8,191.2 674.3,195.6 674.8,191.5 675.2,194.0 675.7,189.1 676.2,191.6 676.6,188.6 677.1,192.0 677.5,186.7 678.0,190.2 678.5,186.2 678.9,190.9 679.4,186.9 679.9,190.1 680.3,185.5 680.8,189.1 681.2,185.3 681.7,189.7 682.2,185.4 682.6,189.4 683.1,184.7 683.6,190.0 684.0,183.8 684.5,187.1 685.0,182.2 685.4,185.4 685.9,183.2 686.3,186.0 686.8,181.1 687.3,184.5 687.7,182.6 688.2,185.6 688.7,181.3 689.1,184.8 689.6,182.5 690.0,186.8 690.5,182.0 691.0,185.8 691.4,182.0 691.9,187.0 692.4,182.0 692.8,186.1 693.3,183.6 693.8,186.5 694.2,184.0 694.7,186.8 695.1,183.3 695.6,185.6 696.1,181.9 696.5,185.0 697.0,181.7 697.5,186.5 697.9,182.8 698.4,185.9 698.8,182.0 699.3,186.1 699.8,182.0 700.2,186.6 700.7,183.3 701.2,187.1 701.6,184.6 702.1,187.9 702.5,184.9 703.0,188.6 703.5,183.8 703.9,187.3 704.4,184.0 704.9,187.8 705.3,184.9 705.8,187.5 706.3,184.8 706.7,188.7 707.2,184.4 707.6,188.3 708.1,184.2 708.6,186.9 709.0,183.3 709.5,186.1 710.0,181.9 710.4,184.9 710.9,182.9 711.3,185.6 711.8,184.0 712.3,188.1 712.7,183.5 713.2,188.5 713.7,184.5 714.1,189.1 714.6,184.2 715.1,190.3 715.5,187.2 716.0,193.0 716.4,189.4 716.9,194.2 717.4,190.8 717.8,196.5 718.3,191.9 718.8,194.5 719.2,191.2 719.7,193.2 720.1,191.1 720.6,194.3 721.1,191.2 721.5,194.0 722.0,190.6 722.5,193.3 722.9,189.8 723.4,193.9 723.9,189.1 724.3,191.6 724.8,189.9 725.2,192.7 725.7,188.2 726.2,192.7 726.6,188.4 727.1,191.7 727.6,187.7 728.0,190.0 728.5,187.5 728.9,191.8 729.4,187.6 729.9,192.2 730.3,186.5 730.8,191.0 731.3,186.4 731.7,189.6 732.2,185.5 732.6,190.1 733.1,188.1 733.6,192.6 734.0,190.7 734.5,194.1 735.0,189.5 735.4,193.7" fill="none" stroke="#00BFC4" stroke-width="1.1" stroke-linejoin="round"/>
<polyline points="656.7,229.5 657.2,232.4 657.6,226.9 658.1,234.1 658.6,229.9 659.0,235.4 659.5,231.2 659.9,235.6 660.4,232.2 660.9,235.3 661.3,231.2 661.8,235.3 662.3,231.5 662.7,238.6 663.2,233.5 663.7,235.9 664.1,233.1 664.6,236.9 665.0,232.1 665.5,235.2 666.0,231.6 666.4,235.6 666.9,232.4 667.4,235.9 667.8,232.2 668.3,235.2 668.7,233.0 669.2,236.4 669.7,234.0 670.1,236.1 670.6,232.0 671.1,236.7 671.5,231.1 672.0,236.2 672.4,230.4 672.9,234.1 673.4,229.8 673.8,235.5 674.3,230.2 674.8,235.9 675.2,232.2 675.7,234.5 676.2,230.3 676.6,234.2 677.1,229.7 677.5,232.9 678.0,226.9 678.5,232.3 678.9,227.8 679.4,231.9 679.9,225.1 680.3,229.8 680.8,226.3 681.2,228.8 681.7,226.5 682.2,228.0 682.6,225.8 683.1,229.2 683.6,225.1 684.0,230.0 684.5,224.8 685.0,228.7 685.4,225.6 685.9,229.8 686.3,225.8 686.8,230.3 687.3,227.0 687.7,231.1 688.2,228.2 688.7,232.0 689.1,227.9 689.6,232.4 690.0,229.2 690.5,231.3 691.0,226.7 691.4,231.2 691.9,224.9 692.4,228.4 692.8,226.7 693.3,228.9 693.8,226.1 694.2,229.3 694.7,226.0 695.1,229.0 695.6,224.2 696.1,227.8 696.5,225.3 697.0,227.9 697.5,224.7 697.9,228.2 698.4,223.8 698.8,230.5 699.3,225.9 699.8,230.1 700.2,225.5 700.7,228.2 701.2,224.6 701.6,227.8 702.1,225.2 702.5,228.5 703.0,225.1 703.5,229.4 703.9,225.2 704.4,229.7 704.9,226.0 705.3,230.7 705.8,226.3 706.3,229.4 706.7,226.4 707.2,231.3 707.6,227.8 708.1,234.2 708.6,229.9 709.0,234.4 709.5,227.6 710.0,231.4 710.4,226.6 710.9,232.2 711.3,228.4 711.8,233.6 712.3,228.3 712.7,232.3 713.2,230.3 713.7,234.6 714.1,230.8 714.6,235.8 715.1,233.2 715.5,237.1 716.0,234.2 716.4,236.9 716.9,234.1 717.4,238.3 717.8,236.7 718.3,238.5 718.8,233.4 719.2,240.0 719.7,235.2 720.1,239.1 720.6,234.3 721.1,240.7 721.5,235.4 722.0,239.7 722.5,233.4 722.9,238.2 723.4,234.1 723.9,237.5 724.3,233.2 724.8,237.0 725.2,232.8 725.7,237.2 726.2,232.8 726.6,236.1 727.1,233.7 727.6,235.6 728.0,233.1 728.5,236.3 728.9,232.6 729.4,236.2 729.9,231.1 730.3,235.4 730.8,234.3 731.3,237.3 731.7,231.4 732.2,235.1 732.6,231.2 733.1,232.4 733.6,230.3 734.0,236.1 734.5,232.7 735.0,236.4 735.4,232.3" fill="none" stroke="#C77CFF" stroke-width="1.1" stroke-linejoin="round"/>
<text x="759.8" y="107.9" font-size="7.9" fill="#1a1a1a">sensor</text>
<line x1="761" x2="777.5" y1="116.1" y2="116.1" stroke="#F8766D" stroke-width="1.3"/>
<text x="780" y="118.3" font-size="6.3" fill="#000">a2</text>
<line x1="761" x2="777.5" y1="131.9" y2="131.9" stroke="#7CAE00" stroke-width="1.3"/>
<text x="780" y="134.1" font-size="6.3" fill="#000">a3</text>
<line x1="761" x2="777.5" y1="147.7" y2="147.7" stroke="#00BFC4" stroke-width="1.3"/>
<text x="780" y="149.9" font-size="6.3" fill="#000">a4</text>
<line x1="761" x2="777.5" y1="163.5" y2="163.5" stroke="#C77CFF" stroke-width="1.3"/>
<text x="780" y="165.7" font-size="6.3" fill="#000">a5</text>
<line x1="219.0" x2="219.0" y1="409" y2="413" stroke="#6a6a6a" stroke-width="0.6"/>
<line x1="238.5" x2="238.5" y1="409" y2="411.2" stroke="#a5a5a5" stroke-width="0.5"/>
<line x1="258.1" x2="258.1" y1="409" y2="411.2" stroke="#a5a5a5" stroke-width="0.5"/>
<text x="219.0" y="419.8" font-size="5" fill="#333" text-anchor="middle">22/03 10:00</text>
<line x1="277.6" x2="277.6" y1="409" y2="413" stroke="#6a6a6a" stroke-width="0.6"/>
<line x1="297.1" x2="297.1" y1="409" y2="411.2" stroke="#a5a5a5" stroke-width="0.5"/>
<line x1="316.7" x2="316.7" y1="409" y2="411.2" stroke="#a5a5a5" stroke-width="0.5"/>
<text x="277.6" y="419.8" font-size="5" fill="#333" text-anchor="middle">22/03 16:20</text>
<line x1="336.2" x2="336.2" y1="409" y2="413" stroke="#6a6a6a" stroke-width="0.6"/>
<line x1="355.7" x2="355.7" y1="409" y2="411.2" stroke="#a5a5a5" stroke-width="0.5"/>
<line x1="375.3" x2="375.3" y1="409" y2="411.2" stroke="#a5a5a5" stroke-width="0.5"/>
<text x="336.2" y="419.8" font-size="5" fill="#333" text-anchor="middle">22/03 22:50</text>
<line x1="394.8" x2="394.8" y1="409" y2="413" stroke="#6a6a6a" stroke-width="0.6"/>
<line x1="414.3" x2="414.3" y1="409" y2="411.2" stroke="#a5a5a5" stroke-width="0.5"/>
<line x1="433.9" x2="433.9" y1="409" y2="411.2" stroke="#a5a5a5" stroke-width="0.5"/>
<text x="394.8" y="419.8" font-size="5" fill="#333" text-anchor="middle">23/03 05:20</text>
<line x1="453.4" x2="453.4" y1="409" y2="413" stroke="#6a6a6a" stroke-width="0.6"/>
<line x1="472.9" x2="472.9" y1="409" y2="411.2" stroke="#a5a5a5" stroke-width="0.5"/>
<line x1="492.5" x2="492.5" y1="409" y2="411.2" stroke="#a5a5a5" stroke-width="0.5"/>
<text x="453.4" y="419.8" font-size="5" fill="#333" text-anchor="middle">23/03 11:50</text>
<line x1="512.0" x2="512.0" y1="409" y2="413" stroke="#6a6a6a" stroke-width="0.6"/>
<line x1="531.5" x2="531.5" y1="409" y2="411.2" stroke="#a5a5a5" stroke-width="0.5"/>
<line x1="551.1" x2="551.1" y1="409" y2="411.2" stroke="#a5a5a5" stroke-width="0.5"/>
<text x="512.0" y="419.8" font-size="5" fill="#333" text-anchor="middle">23/03 18:20</text>
<line x1="570.6" x2="570.6" y1="409" y2="413" stroke="#6a6a6a" stroke-width="0.6"/>
<line x1="590.1" x2="590.1" y1="409" y2="411.2" stroke="#a5a5a5" stroke-width="0.5"/>
<line x1="609.7" x2="609.7" y1="409" y2="411.2" stroke="#a5a5a5" stroke-width="0.5"/>
<text x="570.6" y="419.8" font-size="5" fill="#333" text-anchor="middle">24/03 00:50</text>
<line x1="629.2" x2="629.2" y1="409" y2="413" stroke="#6a6a6a" stroke-width="0.6"/>
<line x1="648.7" x2="648.7" y1="409" y2="411.2" stroke="#a5a5a5" stroke-width="0.5"/>
<line x1="668.3" x2="668.3" y1="409" y2="411.2" stroke="#a5a5a5" stroke-width="0.5"/>
<text x="629.2" y="419.8" font-size="5" fill="#333" text-anchor="middle">24/03 07:20</text>
<line x1="687.8" x2="687.8" y1="409" y2="413" stroke="#6a6a6a" stroke-width="0.6"/>
<line x1="707.3" x2="707.3" y1="409" y2="411.2" stroke="#a5a5a5" stroke-width="0.5"/>
<line x1="726.9" x2="726.9" y1="409" y2="411.2" stroke="#a5a5a5" stroke-width="0.5"/>
<text x="687.8" y="419.8" font-size="5" fill="#333" text-anchor="middle">24/03 13:50</text>
<line x1="746.4" x2="746.4" y1="409" y2="413" stroke="#6a6a6a" stroke-width="0.6"/>
<line x1="765.9" x2="765.9" y1="409" y2="411.2" stroke="#a5a5a5" stroke-width="0.5"/>
<text x="746.4" y="419.8" font-size="5" fill="#333" text-anchor="middle">24/03 20:20</text>
<line x1="788.0" x2="788.0" y1="409" y2="413" stroke="#777" stroke-width="0.6"/>
<text x="787.5" y="419.8" font-size="5" fill="#333" text-anchor="middle">25/03 01:00</text>
<g transform="translate(655.4 80.6)" fill="#b4b4b4"><rect x="-4" y="-2.5" width="8" height="5.5" rx="1"/><rect x="-1.8" y="-3.7" width="3.6" height="1.5"/><circle cx="0" cy="0.3" r="1.6" fill="#fff"/></g>
<g transform="translate(672.5 80.6)"><circle cx="-0.8" cy="-0.8" r="3" fill="none" stroke="#505050" stroke-width="1.3"/><line x1="1.4" y1="1.4" x2="4" y2="4" stroke="#505050" stroke-width="1.6"/></g>
<g transform="translate(684.8 80.6)" stroke="#b4b4b4" stroke-width="1"><line x1="-4" x2="4" y1="0" y2="0"/><line x1="0" x2="0" y1="-4" y2="4"/></g>
<g transform="translate(702.7 80.6)"><rect x="-3.5" y="-3.5" width="7" height="7" fill="#b4b4b4"/><path d="M-2 0 H2 M0 -2 V2" stroke="#fff" stroke-width="1"/></g>
<g transform="translate(715 80.6)"><rect x="-3.5" y="-3.5" width="7" height="7" fill="#b4b4b4"/><path d="M-2 0 H2" stroke="#fff" stroke-width="1"/></g>
<g transform="translate(727.7 80.6)" stroke="#b4b4b4" stroke-width="0.8" fill="none"><path d="M-4 -2 V-4 H-2 M2 -4 H4 V-2 M4 2 V4 H2 M-2 4 H-4 V2 M-3 -3 L3 3 M3 -3 L-3 3"/></g>
<g transform="translate(739.5 80.6)" fill="#b4b4b4"><path d="M-4 0 L0 -4 L4 0 H3 V4 H-3 V0 Z"/></g>
<g transform="translate(759.2 80.6)" fill="#7a7a7a"><path d="M-4 0 L-1.5 -2.5 H4 V2.5 H-1.5 Z"/></g>
<g transform="translate(771.8 80.6)" fill="#b4b4b4"><rect x="-4" y="-3" width="8" height="2.4"/><rect x="-4" y="0.6" width="8" height="2.4"/></g>
<rect x="785.5" y="76" width="8.8" height="9" fill="#3f4f75"/><path d="M787.5 83 V81 M789 83 V79.5 M790.5 83 V81 M792 83 V79.5" stroke="#fff" stroke-width="0.7"/>
<defs><clipPath id="mc"><rect x="825.3" y="74" width="283.7" height="215.7"/></clipPath></defs>
<g clip-path="url(#mc)">
<rect x="825.3" y="74" width="283.7" height="215.7" fill="#edefd9"/>
<line x1="955.5" y1="74" x2="955.5" y2="290" stroke="#d5d5c8" stroke-width="0.6"/>
<path d="M857 68 L848 100 L845 112" stroke="#cc945a" stroke-width="1.1" stroke-dasharray="2.8 1.7" fill="none"/>
<path d="M822 150 L858 139" stroke="#cc945a" stroke-width="1.1" stroke-dasharray="2.8 1.7" fill="none"/>
<path d="M869 141 L872 200 L877 290" stroke="#cc945a" stroke-width="1.1" stroke-dasharray="2.8 1.7" fill="none"/>
<path d="M979 136 L962 210 L948 292" stroke="#cc945a" stroke-width="1.1" stroke-dasharray="2.8 1.7" fill="none"/>
<path d="M1112 214 L1095 250 L1081 292" stroke="#cc945a" stroke-width="1.1" stroke-dasharray="2.8 1.7" fill="none"/>
<path d="M818 104 C835 118 850 136 872 139.5 C900 141 935 140 955 139 C975 137 990 130 1010 121 L1115 77" stroke="#c9c9c0" stroke-width="6.2" fill="none"/>
<path d="M818 104 C835 118 850 136 872 139.5 C900 141 935 140 955 139 C975 137 990 130 1010 121 L1115 77" stroke="#ffffff" stroke-width="5" fill="none"/>
<text x="0" y="1.7" font-size="4.8" fill="#3a3a3a" text-anchor="middle" transform="translate(862 136.2) rotate(21)">Rue du Gault</text>
<text x="0" y="1.7" font-size="4.8" fill="#3a3a3a" text-anchor="middle" transform="translate(1061 99.6) rotate(-22.8)">Rue du Gault</text>
<rect x="831.5" y="120" width="20.5" height="8.3" fill="#f4f4f4" stroke="#cfcfcf" stroke-width="0.5"/>
<text x="834" y="126.5" font-size="5.8" fill="#333">D 154</text>
<rect x="831.5" y="79.5" width="17.2" height="34" rx="1.5" fill="#fff" stroke="#bdbdbd" stroke-width="0.8"/>
<line x1="831.5" x2="848.7" y1="96.3" y2="96.3" stroke="#ccc" stroke-width="0.6"/>
<path d="M837 88 H843.4 M840.2 84.8 V91.2" stroke="#111" stroke-width="1.4"/>
<path d="M837 104.9 H843.4" stroke="#111" stroke-width="1.4"/>
<path d="M1091 274 C1089 269 1086.3 266.5 1086.3 262.8 A4.7 4.7 0 0 1 1095.7 262.8 C1095.7 266.5 1093 269 1091 274 Z" fill="#111"/><circle cx="1091" cy="262.6" r="2.0" fill="#fff"/>
<rect x="968" y="281.5" width="141" height="8.5" fill="#f4f4f0" fill-opacity="0.8"/>
<text x="971.5" y="288" font-size="5.8" fill="#333" textLength="134" lengthAdjust="spacingAndGlyphs"><tspan fill="#0078a8" font-weight="bold">Leaflet</tspan> | © <tspan fill="#0078a8">OpenStreetMap</tspan> contributors, <tspan fill="#0078a8">CC-BY-SA</tspan></text>
</g>
</svg>
</body></html>
